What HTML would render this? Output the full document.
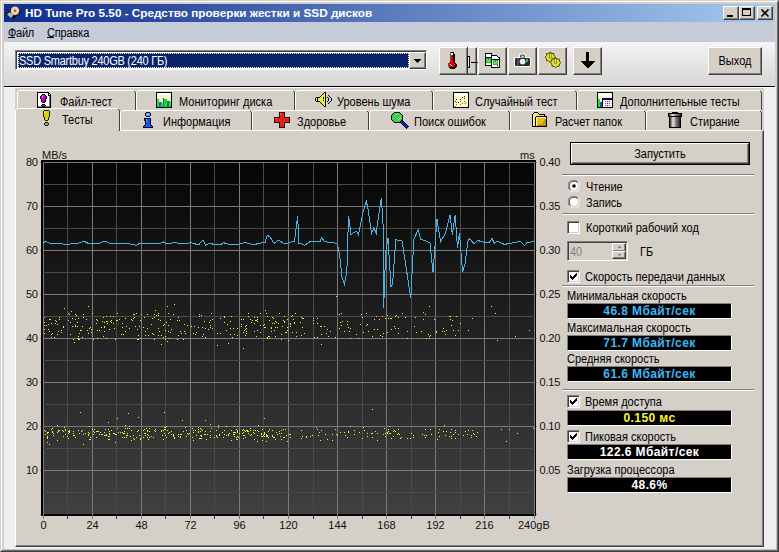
<!DOCTYPE html>
<html><head><meta charset="utf-8"><style>
*{margin:0;padding:0;box-sizing:border-box}
html,body{width:779px;height:552px;overflow:hidden;background:#d4d0c8;font-family:"Liberation Sans", sans-serif;font-size:11px;color:#000}
.a{position:absolute}
.t{position:absolute;white-space:nowrap;line-height:13px;transform:scale(1,1.11);transform-origin:0 2.5px}
.lab{position:absolute;white-space:nowrap;line-height:13px;font-size:11px;color:#101010}
.btn{position:absolute;background:#d4d0c8;border-top:1px solid #fff;border-left:1px solid #fff;border-right:1px solid #404040;border-bottom:1px solid #404040;box-shadow:inset -1px -1px 0 #808080}
.tab{position:absolute;background:#d4d0c8;border-top:1px solid #fff;border-left:1px solid #fff;border-right:1px solid #404040;box-shadow:inset -1px 0 0 #808080}
.sep{position:absolute;height:2px;border-top:1px solid #808080;border-bottom:1px solid #fff}
.box{position:absolute;background:#000;border-top:1px solid #808080;border-left:1px solid #808080;border-right:1px solid #fff;border-bottom:1px solid #fff;font-weight:bold;font-size:12px;text-align:center;line-height:14px;letter-spacing:0.4px}
.chk{position:absolute;width:13px;height:13px;background:#fff;border-top:1px solid #808080;border-left:1px solid #808080;border-right:1px solid #fff;border-bottom:1px solid #fff;box-shadow:inset 1px 1px 0 #404040, inset -1px -1px 0 #d4d0c8}
</style></head><body>
<!-- window frame -->
<div class="a" style="left:0;top:0;width:779px;height:552px;background:#d4d0c8;border-top:1px solid #d4d0c8;border-left:1px solid #d4d0c8;border-right:1px solid #404040;border-bottom:1px solid #404040"></div>
<div class="a" style="left:1px;top:1px;width:777px;height:550px;border-top:1px solid #fff;border-left:1px solid #fff;border-right:1px solid #6a6a6a;border-bottom:1px solid #6a6a6a"></div>
<!-- title bar -->
<div class="a" style="left:4px;top:4px;width:771px;height:18px;background:linear-gradient(90deg,#0e2c8c,#a6caf0)"></div>

<div class="t" style="left:25px;top:6px;color:#fff;font-weight:bold;font-size:11.75px;letter-spacing:0;transform:none">HD Tune Pro 5.50 - Средство проверки жестки и SSD дисков</div>
<div class="btn" style="left:723px;top:6px;width:16px;height:14px"></div>
<div class="a" style="left:727px;top:15px;width:6px;height:2px;background:#000"></div>
<div class="btn" style="left:739px;top:6px;width:16px;height:14px"></div>
<div class="a" style="left:742px;top:8px;width:9px;height:8px;border:1px solid #000;border-top-width:2px"></div>
<div class="btn" style="left:757px;top:6px;width:16px;height:14px"></div>
<svg class="a" style="left:757px;top:6px" width="16" height="14"><path d="M4.5 3.5 L11.5 10.5 M11.5 3.5 L4.5 10.5" stroke="#000" stroke-width="1.6"/></svg>
<!-- menu -->
<div class="a" style="left:4px;top:22px;width:771px;height:20px;background:#c6cbd8"></div>
<div class="t" style="left:8px;top:26px;letter-spacing:-0.3px">Файл</div>
<div class="a" style="left:8px;top:37px;width:7px;height:1px;background:#000"></div>
<div class="t" style="left:47px;top:26px;letter-spacing:-0.15px">Справка</div>
<div class="a" style="left:47px;top:37px;width:7px;height:1px;background:#000"></div>
<!-- toolbar -->
<div class="a" style="left:4px;top:42px;width:771px;height:44px;background:linear-gradient(#f4f4f4,#d6d6d6)"></div>
<div class="a" style="left:4px;top:86px;width:771px;height:1px;background:#000"></div>
<div class="a" style="left:4px;top:87px;width:773px;height:463px;background:#c4c4c4"></div>
<div class="a" style="left:4px;top:87px;width:772px;height:462px;background:#efefef"></div>
<div class="a" style="left:4px;top:87px;width:771px;height:1px;background:#fff"></div>
<!-- combo -->
<div class="a" style="left:15px;top:50px;width:412px;height:20px;background:#fff;border-top:1px solid #808080;border-left:1px solid #808080;border-bottom:1px solid #fff;border-right:1px solid #fff;box-shadow:inset 1px 1px 0 #404040"></div>
<div class="a" style="left:18px;top:53px;width:391px;height:15px;background:#0a246a;outline:1px dotted #fff;outline-offset:-1px"></div>
<div class="t" style="left:19px;top:54px;color:#fff;font-size:11px;letter-spacing:-0.25px">SSD Smartbuy 240GB (240 ГБ)</div>
<div class="btn" style="left:409px;top:52px;width:17px;height:17px"></div>
<svg class="a" style="left:409px;top:52px" width="17" height="17"><path d="M4.5 7 L12.5 7 L8.5 11 Z" fill="#000"/></svg>
<!-- toolbar buttons -->
<div class="btn" style="left:439px;top:47px;width:38px;height:28px"></div>
<div class="a" style="left:466px;top:48px;width:1px;height:26px;background:#808080"></div>
<div class="a" style="left:467px;top:47px;width:1px;height:28px;background:#404040"></div>

<div class="btn" style="left:478px;top:47px;width:29px;height:28px"></div>

<div class="btn" style="left:508px;top:47px;width:29px;height:28px"></div>

<div class="btn" style="left:538px;top:47px;width:29px;height:28px"></div>

<div class="btn" style="left:573px;top:47px;width:29px;height:28px"></div>

<div class="btn" style="left:708px;top:47px;width:54px;height:28px"></div>
<div class="t" style="left:708px;top:54px;width:54px;text-align:center">Выход</div>

<!-- tabs -->
<div class="a" style="left:15px;top:88px;width:749px;height:43px;background:#d4d0c8"></div>
<div class="a" style="left:15px;top:130px;width:749px;height:417px;background:#d4d0c8;border-top:1px solid #fff;border-left:1px solid #fff;border-right:1px solid #404040;border-bottom:1px solid #404040;box-shadow:inset -1px -1px 0 #808080"></div>
<svg class="a" style="left:0;top:0" width="779" height="140" shape-rendering="crispEdges"><rect x="18" y="91" width="117" height="19" fill="#d4d0c8"/><rect x="17" y="92" width="1" height="18" fill="#fff"/><rect x="18" y="91" width="1" height="1" fill="#fff"/><rect x="19" y="90" width="115" height="1" fill="#fff"/><rect x="134" y="91" width="1" height="1" fill="#404040"/><rect x="135" y="92" width="1" height="18" fill="#404040"/><rect x="137" y="91" width="157" height="19" fill="#d4d0c8"/><rect x="136" y="92" width="1" height="18" fill="#fff"/><rect x="137" y="91" width="1" height="1" fill="#fff"/><rect x="138" y="90" width="155" height="1" fill="#fff"/><rect x="293" y="91" width="1" height="1" fill="#404040"/><rect x="294" y="92" width="1" height="18" fill="#404040"/><rect x="296" y="91" width="136" height="19" fill="#d4d0c8"/><rect x="295" y="92" width="1" height="18" fill="#fff"/><rect x="296" y="91" width="1" height="1" fill="#fff"/><rect x="297" y="90" width="134" height="1" fill="#fff"/><rect x="431" y="91" width="1" height="1" fill="#404040"/><rect x="432" y="92" width="1" height="18" fill="#404040"/><rect x="434" y="91" width="142" height="19" fill="#d4d0c8"/><rect x="433" y="92" width="1" height="18" fill="#fff"/><rect x="434" y="91" width="1" height="1" fill="#fff"/><rect x="435" y="90" width="140" height="1" fill="#fff"/><rect x="575" y="91" width="1" height="1" fill="#404040"/><rect x="576" y="92" width="1" height="18" fill="#404040"/><rect x="578" y="91" width="183" height="19" fill="#d4d0c8"/><rect x="577" y="92" width="1" height="18" fill="#fff"/><rect x="578" y="91" width="1" height="1" fill="#fff"/><rect x="579" y="90" width="181" height="1" fill="#fff"/><rect x="760" y="91" width="1" height="1" fill="#404040"/><rect x="761" y="92" width="1" height="18" fill="#404040"/><rect x="121" y="111" width="130" height="19" fill="#d4d0c8"/><rect x="120" y="112" width="1" height="18" fill="#fff"/><rect x="121" y="111" width="1" height="1" fill="#fff"/><rect x="122" y="110" width="128" height="1" fill="#fff"/><rect x="250" y="111" width="1" height="1" fill="#404040"/><rect x="251" y="112" width="1" height="18" fill="#404040"/><rect x="253" y="111" width="115" height="19" fill="#d4d0c8"/><rect x="252" y="112" width="1" height="18" fill="#fff"/><rect x="253" y="111" width="1" height="1" fill="#fff"/><rect x="254" y="110" width="113" height="1" fill="#fff"/><rect x="367" y="111" width="1" height="1" fill="#404040"/><rect x="368" y="112" width="1" height="18" fill="#404040"/><rect x="370" y="111" width="139" height="19" fill="#d4d0c8"/><rect x="369" y="112" width="1" height="18" fill="#fff"/><rect x="370" y="111" width="1" height="1" fill="#fff"/><rect x="371" y="110" width="137" height="1" fill="#fff"/><rect x="508" y="111" width="1" height="1" fill="#404040"/><rect x="509" y="112" width="1" height="18" fill="#404040"/><rect x="511" y="111" width="134" height="19" fill="#d4d0c8"/><rect x="510" y="112" width="1" height="18" fill="#fff"/><rect x="511" y="111" width="1" height="1" fill="#fff"/><rect x="512" y="110" width="132" height="1" fill="#fff"/><rect x="644" y="111" width="1" height="1" fill="#404040"/><rect x="645" y="112" width="1" height="18" fill="#404040"/><rect x="647" y="111" width="114" height="19" fill="#d4d0c8"/><rect x="646" y="112" width="1" height="18" fill="#fff"/><rect x="647" y="111" width="1" height="1" fill="#fff"/><rect x="648" y="110" width="112" height="1" fill="#fff"/><rect x="760" y="111" width="1" height="1" fill="#404040"/><rect x="761" y="112" width="1" height="18" fill="#404040"/><rect x="16" y="109" width="103" height="22" fill="#d4d0c8"/><rect x="15" y="110" width="1" height="21" fill="#fff"/><rect x="16" y="109" width="1" height="1" fill="#fff"/><rect x="17" y="108" width="101" height="1" fill="#fff"/><rect x="118" y="109" width="1" height="1" fill="#404040"/><rect x="119" y="110" width="1" height="21" fill="#404040"/></svg>
<div class="t" style="left:60px;top:95px">Файл-тест</div>
<div class="t" style="left:179px;top:95px">Мониторинг диска</div>
<div class="t" style="left:337px;top:95px">Уровень шума</div>
<div class="t" style="left:475px;top:95px">Случайный тест</div>
<div class="t" style="left:620px;top:95px">Дополнительные тесты</div>
<div class="t" style="left:62px;top:113px">Тесты</div>
<div class="t" style="left:163px;top:115px">Информация</div>
<div class="t" style="left:297px;top:115px">Здоровье</div>
<div class="t" style="left:414px;top:115px">Поиск ошибок</div>
<div class="t" style="left:555px;top:115px">Расчет папок</div>
<div class="t" style="left:690px;top:115px">Стирание</div>


<!-- chart -->
<div class="lab" style="left:42px;top:149px">MB/s</div>
<div class="lab" style="left:520px;top:149px">ms</div>
<svg class="a" style="left:0;top:0" width="779" height="552">
 <defs><linearGradient id="bg" x1="0" y1="0" x2="0" y2="1"><stop offset="0" stop-color="#050505"/><stop offset="1" stop-color="#404040"/></linearGradient></defs>
 <rect x="41" y="160" width="495" height="356" fill="#000"/>
 <rect x="43" y="162" width="492" height="352" fill="url(#bg)"/>
 <rect x="43" y="162" width="1" height="352" fill="#7a7a7a"/><rect x="67" y="162" width="1" height="352" fill="#4a4a4a"/><rect x="92" y="162" width="1" height="352" fill="#7a7a7a"/><rect x="116" y="162" width="1" height="352" fill="#4a4a4a"/><rect x="141" y="162" width="1" height="352" fill="#7a7a7a"/><rect x="165" y="162" width="1" height="352" fill="#4a4a4a"/><rect x="190" y="162" width="1" height="352" fill="#7a7a7a"/><rect x="214" y="162" width="1" height="352" fill="#4a4a4a"/><rect x="239" y="162" width="1" height="352" fill="#7a7a7a"/><rect x="263" y="162" width="1" height="352" fill="#4a4a4a"/><rect x="288" y="162" width="1" height="352" fill="#7a7a7a"/><rect x="313" y="162" width="1" height="352" fill="#4a4a4a"/><rect x="337" y="162" width="1" height="352" fill="#7a7a7a"/><rect x="362" y="162" width="1" height="352" fill="#4a4a4a"/><rect x="386" y="162" width="1" height="352" fill="#7a7a7a"/><rect x="411" y="162" width="1" height="352" fill="#4a4a4a"/><rect x="435" y="162" width="1" height="352" fill="#7a7a7a"/><rect x="460" y="162" width="1" height="352" fill="#4a4a4a"/><rect x="484" y="162" width="1" height="352" fill="#7a7a7a"/><rect x="509" y="162" width="1" height="352" fill="#4a4a4a"/><rect x="534" y="162" width="1" height="352" fill="#7a7a7a"/><rect x="43" y="162" width="492" height="1" fill="#7a7a7a"/><rect x="43" y="184" width="492" height="1" fill="#4a4a4a"/><rect x="43" y="206" width="492" height="1" fill="#7a7a7a"/><rect x="43" y="228" width="492" height="1" fill="#4a4a4a"/><rect x="43" y="250" width="492" height="1" fill="#7a7a7a"/><rect x="43" y="272" width="492" height="1" fill="#4a4a4a"/><rect x="43" y="294" width="492" height="1" fill="#7a7a7a"/><rect x="43" y="316" width="492" height="1" fill="#4a4a4a"/><rect x="43" y="338" width="492" height="1" fill="#7a7a7a"/><rect x="43" y="360" width="492" height="1" fill="#4a4a4a"/><rect x="43" y="382" width="492" height="1" fill="#7a7a7a"/><rect x="43" y="404" width="492" height="1" fill="#4a4a4a"/><rect x="43" y="426" width="492" height="1" fill="#7a7a7a"/><rect x="43" y="448" width="492" height="1" fill="#4a4a4a"/><rect x="43" y="470" width="492" height="1" fill="#7a7a7a"/><rect x="43" y="492" width="492" height="1" fill="#4a4a4a"/><rect x="43" y="514" width="492" height="1" fill="#7a7a7a"/>
 <rect x="41" y="514" width="495" height="2" fill="#000"/>
 <rect x="40" y="162" width="1" height="1" fill="#808080"/><rect x="536" y="162" width="1" height="1" fill="#808080"/><rect x="40" y="206" width="1" height="1" fill="#808080"/><rect x="536" y="206" width="1" height="1" fill="#808080"/><rect x="40" y="250" width="1" height="1" fill="#808080"/><rect x="536" y="250" width="1" height="1" fill="#808080"/><rect x="40" y="294" width="1" height="1" fill="#808080"/><rect x="536" y="294" width="1" height="1" fill="#808080"/><rect x="40" y="338" width="1" height="1" fill="#808080"/><rect x="536" y="338" width="1" height="1" fill="#808080"/><rect x="40" y="382" width="1" height="1" fill="#808080"/><rect x="536" y="382" width="1" height="1" fill="#808080"/><rect x="40" y="426" width="1" height="1" fill="#808080"/><rect x="536" y="426" width="1" height="1" fill="#808080"/><rect x="40" y="470" width="1" height="1" fill="#808080"/><rect x="536" y="470" width="1" height="1" fill="#808080"/><rect x="40" y="514" width="1" height="1" fill="#808080"/><rect x="536" y="514" width="1" height="1" fill="#808080"/><rect x="43" y="514" width="1" height="5" fill="#7a7a7a"/><rect x="67" y="516" width="1" height="3" fill="#404040"/><rect x="92" y="514" width="1" height="5" fill="#7a7a7a"/><rect x="116" y="516" width="1" height="3" fill="#404040"/><rect x="141" y="514" width="1" height="5" fill="#7a7a7a"/><rect x="165" y="516" width="1" height="3" fill="#404040"/><rect x="190" y="514" width="1" height="5" fill="#7a7a7a"/><rect x="214" y="516" width="1" height="3" fill="#404040"/><rect x="239" y="514" width="1" height="5" fill="#7a7a7a"/><rect x="263" y="516" width="1" height="3" fill="#404040"/><rect x="288" y="514" width="1" height="5" fill="#7a7a7a"/><rect x="313" y="516" width="1" height="3" fill="#404040"/><rect x="337" y="514" width="1" height="5" fill="#7a7a7a"/><rect x="362" y="516" width="1" height="3" fill="#404040"/><rect x="386" y="514" width="1" height="5" fill="#7a7a7a"/><rect x="411" y="516" width="1" height="3" fill="#404040"/><rect x="435" y="514" width="1" height="5" fill="#7a7a7a"/><rect x="460" y="516" width="1" height="3" fill="#404040"/><rect x="484" y="514" width="1" height="5" fill="#7a7a7a"/><rect x="509" y="516" width="1" height="3" fill="#404040"/><rect x="534" y="514" width="1" height="5" fill="#7a7a7a"/>
 <polyline points="43.0,243.0 45.6,241.2 50.0,243.3 60.0,243.3 66.5,244.9 72.0,243.5 78.0,243.3 84.0,241.2 88.0,243.3 100.0,243.0 104.0,240.9 110.0,243.3 120.0,243.3 128.0,243.5 136.3,245.4 140.0,243.0 150.0,243.3 160.0,243.8 163.2,241.7 165.6,243.8 176.0,242.5 178.5,243.8 191.3,242.8 198.5,244.9 203.0,240.0 205.7,244.9 208.2,243.8 221.0,244.4 223.9,242.5 225.8,243.8 235.4,244.9 245.0,242.5 254.7,244.9 258.0,243.3 265.1,242.5 267.2,235.2 270.0,236.9 274.0,243.3 278.8,240.0 282.0,242.5 285.0,244.0 289.0,242.5 294.5,241.2 297.6,216.4 299.0,243.5 300.8,243.0 304.5,245.4 310.0,241.7 319.9,241.7 321.7,237.6 324.4,241.7 330.7,242.5 335.0,243.0 337.4,244.0 339.7,256.0 342.0,277.0 344.4,284.0 346.8,272.4 348.0,232.4 348.6,216.4 351.0,234.7 353.8,232.4 356.6,231.2 358.5,234.7 363.2,211.2 366.3,201.3 368.0,208.8 371.5,233.5 373.8,227.6 376.2,233.5 379.2,211.2 381.4,198.2 383.2,226.5 383.7,307.6 385.6,253.5 388.0,238.2 391.0,286.5 392.6,284.1 395.7,239.9 402.0,240.6 410.8,298.2 413.8,239.4 418.2,229.5 420.6,239.4 425.3,240.6 430.0,243.0 433.0,272.4 437.0,219.4 440.6,241.8 445.3,233.5 450.0,214.7 452.4,234.7 455.2,215.0 457.5,248.0 459.4,232.6 462.6,272.0 465.2,263.3 467.7,241.7 469.6,238.6 474.0,243.6 477.8,240.5 484.2,242.4 489.3,242.4 492.0,238.6 494.3,243.2 496.9,241.1 500.0,242.4 504.5,244.5 508.3,243.6 516.0,242.4 520.4,241.1 524.5,245.3 527.3,242.4 534.3,241.7" fill="none" stroke="#4cb2e6" stroke-width="1" shape-rendering="crispEdges"/>
 <g fill="#f0f030"><rect x="122" y="323" width="1" height="1"/><rect x="173" y="314" width="1" height="1"/><rect x="166" y="322" width="1" height="1"/><rect x="148" y="335" width="1" height="1"/><rect x="243" y="332" width="1" height="1"/><rect x="97" y="338" width="1" height="1"/><rect x="183" y="339" width="1" height="1"/><rect x="55" y="320" width="1" height="1"/><rect x="78" y="318" width="1" height="1"/><rect x="87" y="330" width="1" height="1"/><rect x="133" y="314" width="1" height="1"/><rect x="58" y="331" width="1" height="1"/><rect x="147" y="328" width="1" height="1"/><rect x="153" y="334" width="1" height="1"/><rect x="212" y="328" width="1" height="1"/><rect x="170" y="332" width="1" height="1"/><rect x="113" y="316" width="1" height="1"/><rect x="144" y="317" width="1" height="1"/><rect x="161" y="344" width="1" height="1"/><rect x="205" y="328" width="1" height="1"/><rect x="254" y="331" width="1" height="1"/><rect x="187" y="325" width="1" height="1"/><rect x="246" y="325" width="1" height="1"/><rect x="204" y="321" width="1" height="1"/><rect x="283" y="320" width="1" height="1"/><rect x="136" y="313" width="1" height="1"/><rect x="155" y="310" width="1" height="1"/><rect x="72" y="326" width="1" height="1"/><rect x="103" y="336" width="1" height="1"/><rect x="63" y="327" width="1" height="1"/><rect x="256" y="336" width="1" height="1"/><rect x="111" y="322" width="1" height="1"/><rect x="257" y="317" width="1" height="1"/><rect x="86" y="319" width="1" height="1"/><rect x="160" y="320" width="1" height="1"/><rect x="44" y="322" width="1" height="1"/><rect x="180" y="331" width="1" height="1"/><rect x="168" y="331" width="1" height="1"/><rect x="57" y="334" width="1" height="1"/><rect x="254" y="323" width="1" height="1"/><rect x="140" y="320" width="1" height="1"/><rect x="196" y="332" width="1" height="1"/><rect x="83" y="314" width="1" height="1"/><rect x="44" y="329" width="1" height="1"/><rect x="68" y="313" width="1" height="1"/><rect x="254" y="317" width="1" height="1"/><rect x="104" y="322" width="1" height="1"/><rect x="73" y="339" width="1" height="1"/><rect x="156" y="315" width="1" height="1"/><rect x="68" y="320" width="1" height="1"/><rect x="243" y="348" width="1" height="1"/><rect x="171" y="329" width="1" height="1"/><rect x="174" y="304" width="1" height="1"/><rect x="252" y="320" width="1" height="1"/><rect x="132" y="320" width="1" height="1"/><rect x="230" y="334" width="1" height="1"/><rect x="123" y="334" width="1" height="1"/><rect x="281" y="334" width="1" height="1"/><rect x="241" y="319" width="1" height="1"/><rect x="168" y="313" width="1" height="1"/><rect x="50" y="319" width="1" height="1"/><rect x="210" y="325" width="1" height="1"/><rect x="269" y="338" width="1" height="1"/><rect x="131" y="319" width="1" height="1"/><rect x="91" y="329" width="1" height="1"/><rect x="260" y="325" width="1" height="1"/><rect x="201" y="315" width="1" height="1"/><rect x="203" y="334" width="1" height="1"/><rect x="224" y="317" width="1" height="1"/><rect x="234" y="334" width="1" height="1"/><rect x="278" y="323" width="1" height="1"/><rect x="272" y="317" width="1" height="1"/><rect x="74" y="342" width="1" height="1"/><rect x="79" y="339" width="1" height="1"/><rect x="202" y="327" width="1" height="1"/><rect x="75" y="314" width="1" height="1"/><rect x="277" y="327" width="1" height="1"/><rect x="269" y="336" width="1" height="1"/><rect x="243" y="319" width="1" height="1"/><rect x="114" y="328" width="1" height="1"/><rect x="106" y="316" width="1" height="1"/><rect x="263" y="325" width="1" height="1"/><rect x="184" y="324" width="1" height="1"/><rect x="265" y="327" width="1" height="1"/><rect x="170" y="319" width="1" height="1"/><rect x="44" y="317" width="1" height="1"/><rect x="158" y="328" width="1" height="1"/><rect x="122" y="327" width="1" height="1"/><rect x="233" y="328" width="1" height="1"/><rect x="179" y="320" width="1" height="1"/><rect x="230" y="328" width="1" height="1"/><rect x="227" y="324" width="1" height="1"/><rect x="191" y="326" width="1" height="1"/><rect x="210" y="327" width="1" height="1"/><rect x="159" y="331" width="1" height="1"/><rect x="255" y="320" width="1" height="1"/><rect x="178" y="335" width="1" height="1"/><rect x="77" y="322" width="1" height="1"/><rect x="101" y="327" width="1" height="1"/><rect x="205" y="337" width="1" height="1"/><rect x="81" y="330" width="1" height="1"/><rect x="78" y="339" width="1" height="1"/><rect x="96" y="323" width="1" height="1"/><rect x="161" y="335" width="1" height="1"/><rect x="82" y="326" width="1" height="1"/><rect x="125" y="318" width="1" height="1"/><rect x="48" y="324" width="1" height="1"/><rect x="48" y="329" width="1" height="1"/><rect x="167" y="341" width="1" height="1"/><rect x="281" y="339" width="1" height="1"/><rect x="69" y="314" width="1" height="1"/><rect x="231" y="316" width="1" height="1"/><rect x="145" y="335" width="1" height="1"/><rect x="106" y="338" width="1" height="1"/><rect x="212" y="319" width="1" height="1"/><rect x="57" y="324" width="1" height="1"/><rect x="61" y="330" width="1" height="1"/><rect x="237" y="328" width="1" height="1"/><rect x="251" y="322" width="1" height="1"/><rect x="177" y="320" width="1" height="1"/><rect x="75" y="319" width="1" height="1"/><rect x="70" y="322" width="1" height="1"/><rect x="56" y="321" width="1" height="1"/><rect x="117" y="320" width="1" height="1"/><rect x="164" y="324" width="1" height="1"/><rect x="104" y="327" width="1" height="1"/><rect x="220" y="318" width="1" height="1"/><rect x="158" y="315" width="1" height="1"/><rect x="241" y="326" width="1" height="1"/><rect x="245" y="326" width="1" height="1"/><rect x="209" y="322" width="1" height="1"/><rect x="244" y="330" width="1" height="1"/><rect x="141" y="314" width="1" height="1"/><rect x="75" y="325" width="1" height="1"/><rect x="83" y="317" width="1" height="1"/><rect x="246" y="331" width="1" height="1"/><rect x="111" y="320" width="1" height="1"/><rect x="154" y="317" width="1" height="1"/><rect x="275" y="327" width="1" height="1"/><rect x="102" y="321" width="1" height="1"/><rect x="129" y="328" width="1" height="1"/><rect x="135" y="326" width="1" height="1"/><rect x="92" y="313" width="1" height="1"/><rect x="107" y="323" width="1" height="1"/><rect x="49" y="319" width="1" height="1"/><rect x="185" y="333" width="1" height="1"/><rect x="202" y="336" width="1" height="1"/><rect x="137" y="339" width="1" height="1"/><rect x="80" y="330" width="1" height="1"/><rect x="54" y="337" width="1" height="1"/><rect x="195" y="334" width="1" height="1"/><rect x="77" y="326" width="1" height="1"/><rect x="245" y="335" width="1" height="1"/><rect x="184" y="331" width="1" height="1"/><rect x="211" y="313" width="1" height="1"/><rect x="76" y="315" width="1" height="1"/><rect x="245" y="329" width="1" height="1"/><rect x="194" y="326" width="1" height="1"/><rect x="44" y="333" width="1" height="1"/><rect x="165" y="330" width="1" height="1"/><rect x="59" y="319" width="1" height="1"/><rect x="61" y="332" width="1" height="1"/><rect x="93" y="339" width="1" height="1"/><rect x="163" y="325" width="1" height="1"/><rect x="208" y="329" width="1" height="1"/><rect x="198" y="327" width="1" height="1"/><rect x="79" y="333" width="1" height="1"/><rect x="117" y="313" width="1" height="1"/><rect x="58" y="331" width="1" height="1"/><rect x="210" y="320" width="1" height="1"/><rect x="168" y="325" width="1" height="1"/><rect x="72" y="318" width="1" height="1"/><rect x="279" y="313" width="1" height="1"/><rect x="154" y="339" width="1" height="1"/><rect x="152" y="318" width="1" height="1"/><rect x="271" y="328" width="1" height="1"/><rect x="78" y="338" width="1" height="1"/><rect x="75" y="326" width="1" height="1"/><rect x="257" y="319" width="1" height="1"/><rect x="260" y="313" width="1" height="1"/><rect x="44" y="325" width="1" height="1"/><rect x="116" y="320" width="1" height="1"/><rect x="246" y="333" width="1" height="1"/><rect x="224" y="316" width="1" height="1"/><rect x="267" y="337" width="1" height="1"/><rect x="113" y="323" width="1" height="1"/><rect x="284" y="322" width="1" height="1"/><rect x="147" y="314" width="1" height="1"/><rect x="68" y="320" width="1" height="1"/><rect x="269" y="320" width="1" height="1"/><rect x="167" y="306" width="1" height="1"/><rect x="257" y="330" width="1" height="1"/><rect x="264" y="327" width="1" height="1"/><rect x="217" y="345" width="1" height="1"/><rect x="220" y="333" width="1" height="1"/><rect x="199" y="314" width="1" height="1"/><rect x="267" y="316" width="1" height="1"/><rect x="115" y="339" width="1" height="1"/><rect x="106" y="321" width="1" height="1"/><rect x="178" y="317" width="1" height="1"/><rect x="82" y="337" width="1" height="1"/><rect x="163" y="337" width="1" height="1"/><rect x="284" y="316" width="1" height="1"/><rect x="90" y="327" width="1" height="1"/><rect x="126" y="326" width="1" height="1"/><rect x="181" y="333" width="1" height="1"/><rect x="143" y="327" width="1" height="1"/><rect x="134" y="314" width="1" height="1"/><rect x="110" y="316" width="1" height="1"/><rect x="165" y="336" width="1" height="1"/><rect x="96" y="319" width="1" height="1"/><rect x="140" y="338" width="1" height="1"/><rect x="248" y="313" width="1" height="1"/><rect x="51" y="337" width="1" height="1"/><rect x="158" y="313" width="1" height="1"/><rect x="138" y="335" width="1" height="1"/><rect x="250" y="319" width="1" height="1"/><rect x="70" y="334" width="1" height="1"/><rect x="169" y="338" width="1" height="1"/><rect x="217" y="333" width="1" height="1"/><rect x="154" y="314" width="1" height="1"/><rect x="232" y="337" width="1" height="1"/><rect x="199" y="316" width="1" height="1"/><rect x="104" y="331" width="1" height="1"/><rect x="71" y="311" width="1" height="1"/><rect x="137" y="329" width="1" height="1"/><rect x="46" y="325" width="1" height="1"/><rect x="275" y="336" width="1" height="1"/><rect x="158" y="319" width="1" height="1"/><rect x="275" y="321" width="1" height="1"/><rect x="49" y="331" width="1" height="1"/><rect x="145" y="331" width="1" height="1"/><rect x="266" y="313" width="1" height="1"/><rect x="125" y="331" width="1" height="1"/><rect x="91" y="332" width="1" height="1"/><rect x="165" y="339" width="1" height="1"/><rect x="119" y="319" width="1" height="1"/><rect x="97" y="320" width="1" height="1"/><rect x="273" y="318" width="1" height="1"/><rect x="97" y="330" width="1" height="1"/><rect x="272" y="323" width="1" height="1"/><rect x="138" y="339" width="1" height="1"/><rect x="78" y="336" width="1" height="1"/><rect x="260" y="332" width="1" height="1"/><rect x="284" y="321" width="1" height="1"/><rect x="88" y="333" width="1" height="1"/><rect x="51" y="323" width="1" height="1"/><rect x="134" y="317" width="1" height="1"/><rect x="44" y="322" width="1" height="1"/><rect x="274" y="330" width="1" height="1"/><rect x="276" y="322" width="1" height="1"/><rect x="241" y="324" width="1" height="1"/><rect x="55" y="323" width="1" height="1"/><rect x="265" y="310" width="1" height="1"/><rect x="51" y="334" width="1" height="1"/><rect x="228" y="343" width="1" height="1"/><rect x="52" y="333" width="1" height="1"/><rect x="224" y="322" width="1" height="1"/><rect x="109" y="329" width="1" height="1"/><rect x="107" y="321" width="1" height="1"/><rect x="110" y="321" width="1" height="1"/><rect x="226" y="330" width="1" height="1"/><rect x="271" y="327" width="1" height="1"/><rect x="274" y="323" width="1" height="1"/><rect x="104" y="326" width="1" height="1"/><rect x="267" y="338" width="1" height="1"/><rect x="237" y="335" width="1" height="1"/><rect x="230" y="321" width="1" height="1"/><rect x="121" y="334" width="1" height="1"/><rect x="63" y="326" width="1" height="1"/><rect x="59" y="317" width="1" height="1"/><rect x="177" y="339" width="1" height="1"/><rect x="256" y="320" width="1" height="1"/><rect x="64" y="308" width="1" height="1"/><rect x="151" y="324" width="1" height="1"/><rect x="193" y="333" width="1" height="1"/><rect x="248" y="316" width="1" height="1"/><rect x="246" y="328" width="1" height="1"/><rect x="133" y="318" width="1" height="1"/><rect x="103" y="317" width="1" height="1"/><rect x="257" y="321" width="1" height="1"/><rect x="139" y="326" width="1" height="1"/><rect x="99" y="330" width="1" height="1"/><rect x="282" y="326" width="1" height="1"/><rect x="158" y="335" width="1" height="1"/><rect x="264" y="324" width="1" height="1"/><rect x="89" y="328" width="1" height="1"/><rect x="268" y="336" width="1" height="1"/><rect x="152" y="333" width="1" height="1"/><rect x="271" y="331" width="1" height="1"/><rect x="390" y="318" width="1" height="1"/><rect x="350" y="328" width="1" height="1"/><rect x="391" y="318" width="1" height="1"/><rect x="287" y="330" width="1" height="1"/><rect x="317" y="318" width="1" height="1"/><rect x="425" y="314" width="1" height="1"/><rect x="302" y="327" width="1" height="1"/><rect x="398" y="333" width="1" height="1"/><rect x="313" y="323" width="1" height="1"/><rect x="335" y="337" width="1" height="1"/><rect x="340" y="322" width="1" height="1"/><rect x="358" y="338" width="1" height="1"/><rect x="349" y="331" width="1" height="1"/><rect x="321" y="334" width="1" height="1"/><rect x="430" y="335" width="1" height="1"/><rect x="366" y="313" width="1" height="1"/><rect x="382" y="336" width="1" height="1"/><rect x="300" y="322" width="1" height="1"/><rect x="374" y="319" width="1" height="1"/><rect x="335" y="337" width="1" height="1"/><rect x="304" y="333" width="1" height="1"/><rect x="456" y="316" width="1" height="1"/><rect x="451" y="325" width="1" height="1"/><rect x="294" y="323" width="1" height="1"/><rect x="445" y="334" width="1" height="1"/><rect x="313" y="318" width="1" height="1"/><rect x="356" y="334" width="1" height="1"/><rect x="317" y="323" width="1" height="1"/><rect x="376" y="316" width="1" height="1"/><rect x="328" y="336" width="1" height="1"/><rect x="292" y="332" width="1" height="1"/><rect x="291" y="316" width="1" height="1"/><rect x="391" y="329" width="1" height="1"/><rect x="339" y="328" width="1" height="1"/><rect x="360" y="324" width="1" height="1"/><rect x="362" y="317" width="1" height="1"/><rect x="326" y="333" width="1" height="1"/><rect x="366" y="325" width="1" height="1"/><rect x="303" y="318" width="1" height="1"/><rect x="361" y="314" width="1" height="1"/><rect x="292" y="315" width="1" height="1"/><rect x="414" y="326" width="1" height="1"/><rect x="294" y="322" width="1" height="1"/><rect x="453" y="330" width="1" height="1"/><rect x="436" y="332" width="1" height="1"/><rect x="429" y="338" width="1" height="1"/><rect x="372" y="336" width="1" height="1"/><rect x="314" y="337" width="1" height="1"/><rect x="296" y="332" width="1" height="1"/><rect x="313" y="320" width="1" height="1"/><rect x="429" y="306" width="1" height="1"/><rect x="321" y="326" width="1" height="1"/><rect x="341" y="325" width="1" height="1"/><rect x="317" y="337" width="1" height="1"/><rect x="405" y="317" width="1" height="1"/><rect x="423" y="312" width="1" height="1"/><rect x="348" y="327" width="1" height="1"/><rect x="387" y="315" width="1" height="1"/><rect x="460" y="323" width="1" height="1"/><rect x="426" y="338" width="1" height="1"/><rect x="387" y="332" width="1" height="1"/><rect x="363" y="332" width="1" height="1"/><rect x="293" y="319" width="1" height="1"/><rect x="398" y="328" width="1" height="1"/><rect x="402" y="313" width="1" height="1"/><rect x="290" y="323" width="1" height="1"/><rect x="394" y="326" width="1" height="1"/><rect x="443" y="328" width="1" height="1"/><rect x="288" y="340" width="1" height="1"/><rect x="347" y="321" width="1" height="1"/><rect x="388" y="318" width="1" height="1"/><rect x="395" y="316" width="1" height="1"/><rect x="450" y="316" width="1" height="1"/><rect x="301" y="335" width="1" height="1"/><rect x="423" y="319" width="1" height="1"/><rect x="287" y="327" width="1" height="1"/><rect x="347" y="324" width="1" height="1"/><rect x="450" y="319" width="1" height="1"/><rect x="444" y="331" width="1" height="1"/><rect x="379" y="319" width="1" height="1"/><rect x="295" y="313" width="1" height="1"/><rect x="382" y="316" width="1" height="1"/><rect x="320" y="326" width="1" height="1"/><rect x="398" y="317" width="1" height="1"/><rect x="339" y="314" width="1" height="1"/><rect x="442" y="331" width="1" height="1"/><rect x="286" y="332" width="1" height="1"/><rect x="367" y="324" width="1" height="1"/><rect x="324" y="326" width="1" height="1"/><rect x="344" y="331" width="1" height="1"/><rect x="434" y="319" width="1" height="1"/><rect x="383" y="333" width="1" height="1"/><rect x="377" y="329" width="1" height="1"/><rect x="455" y="335" width="1" height="1"/><rect x="287" y="319" width="1" height="1"/><rect x="416" y="332" width="1" height="1"/><rect x="342" y="321" width="1" height="1"/><rect x="327" y="329" width="1" height="1"/><rect x="407" y="338" width="1" height="1"/><rect x="368" y="331" width="1" height="1"/><rect x="436" y="331" width="1" height="1"/><rect x="385" y="318" width="1" height="1"/><rect x="395" y="328" width="1" height="1"/><rect x="446" y="330" width="1" height="1"/><rect x="449" y="316" width="1" height="1"/><rect x="290" y="326" width="1" height="1"/><rect x="407" y="331" width="1" height="1"/><rect x="415" y="317" width="1" height="1"/><rect x="429" y="336" width="1" height="1"/><rect x="296" y="336" width="1" height="1"/><rect x="452" y="320" width="1" height="1"/><rect x="321" y="344" width="1" height="1"/><rect x="428" y="334" width="1" height="1"/><rect x="396" y="315" width="1" height="1"/><rect x="302" y="318" width="1" height="1"/><rect x="341" y="313" width="1" height="1"/><rect x="330" y="331" width="1" height="1"/><rect x="350" y="338" width="1" height="1"/><rect x="374" y="329" width="1" height="1"/><rect x="290" y="324" width="1" height="1"/><rect x="421" y="331" width="1" height="1"/><rect x="380" y="335" width="1" height="1"/><rect x="301" y="317" width="1" height="1"/><rect x="285" y="332" width="1" height="1"/><rect x="458" y="330" width="1" height="1"/><rect x="88" y="306" width="1" height="1"/><rect x="336" y="296" width="1" height="1"/><rect x="491" y="306" width="1" height="1"/><rect x="495" y="313" width="1" height="1"/><rect x="497" y="340" width="1" height="1"/><rect x="515" y="336" width="1" height="1"/><rect x="529" y="330" width="1" height="1"/><rect x="472" y="318" width="1" height="1"/><rect x="468" y="330" width="1" height="1"/><rect x="164" y="427" width="1" height="1"/><rect x="89" y="433" width="1" height="1"/><rect x="165" y="429" width="1" height="1"/><rect x="108" y="439" width="1" height="1"/><rect x="276" y="432" width="1" height="1"/><rect x="216" y="435" width="1" height="1"/><rect x="166" y="437" width="1" height="1"/><rect x="63" y="436" width="1" height="1"/><rect x="237" y="431" width="1" height="1"/><rect x="198" y="427" width="1" height="1"/><rect x="131" y="430" width="1" height="1"/><rect x="263" y="435" width="1" height="1"/><rect x="65" y="434" width="1" height="1"/><rect x="94" y="432" width="1" height="1"/><rect x="108" y="436" width="1" height="1"/><rect x="137" y="431" width="1" height="1"/><rect x="261" y="433" width="1" height="1"/><rect x="174" y="437" width="1" height="1"/><rect x="229" y="433" width="1" height="1"/><rect x="129" y="428" width="1" height="1"/><rect x="124" y="437" width="1" height="1"/><rect x="206" y="439" width="1" height="1"/><rect x="226" y="435" width="1" height="1"/><rect x="234" y="436" width="1" height="1"/><rect x="186" y="436" width="1" height="1"/><rect x="261" y="436" width="1" height="1"/><rect x="102" y="434" width="1" height="1"/><rect x="216" y="436" width="1" height="1"/><rect x="251" y="434" width="1" height="1"/><rect x="104" y="435" width="1" height="1"/><rect x="124" y="431" width="1" height="1"/><rect x="124" y="433" width="1" height="1"/><rect x="90" y="439" width="1" height="1"/><rect x="69" y="432" width="1" height="1"/><rect x="280" y="436" width="1" height="1"/><rect x="286" y="435" width="1" height="1"/><rect x="239" y="433" width="1" height="1"/><rect x="92" y="429" width="1" height="1"/><rect x="200" y="435" width="1" height="1"/><rect x="139" y="435" width="1" height="1"/><rect x="52" y="428" width="1" height="1"/><rect x="214" y="437" width="1" height="1"/><rect x="167" y="430" width="1" height="1"/><rect x="78" y="430" width="1" height="1"/><rect x="192" y="428" width="1" height="1"/><rect x="267" y="436" width="1" height="1"/><rect x="149" y="428" width="1" height="1"/><rect x="147" y="430" width="1" height="1"/><rect x="100" y="432" width="1" height="1"/><rect x="234" y="426" width="1" height="1"/><rect x="216" y="436" width="1" height="1"/><rect x="201" y="429" width="1" height="1"/><rect x="155" y="431" width="1" height="1"/><rect x="68" y="438" width="1" height="1"/><rect x="147" y="434" width="1" height="1"/><rect x="198" y="427" width="1" height="1"/><rect x="105" y="429" width="1" height="1"/><rect x="196" y="435" width="1" height="1"/><rect x="144" y="429" width="1" height="1"/><rect x="89" y="426" width="1" height="1"/><rect x="205" y="434" width="1" height="1"/><rect x="164" y="429" width="1" height="1"/><rect x="283" y="437" width="1" height="1"/><rect x="83" y="434" width="1" height="1"/><rect x="236" y="437" width="1" height="1"/><rect x="68" y="431" width="1" height="1"/><rect x="185" y="427" width="1" height="1"/><rect x="169" y="432" width="1" height="1"/><rect x="201" y="435" width="1" height="1"/><rect x="144" y="429" width="1" height="1"/><rect x="277" y="434" width="1" height="1"/><rect x="140" y="438" width="1" height="1"/><rect x="231" y="440" width="1" height="1"/><rect x="131" y="440" width="1" height="1"/><rect x="57" y="432" width="1" height="1"/><rect x="47" y="437" width="1" height="1"/><rect x="146" y="428" width="1" height="1"/><rect x="130" y="436" width="1" height="1"/><rect x="109" y="434" width="1" height="1"/><rect x="275" y="439" width="1" height="1"/><rect x="173" y="434" width="1" height="1"/><rect x="140" y="439" width="1" height="1"/><rect x="96" y="437" width="1" height="1"/><rect x="243" y="438" width="1" height="1"/><rect x="200" y="428" width="1" height="1"/><rect x="99" y="434" width="1" height="1"/><rect x="281" y="430" width="1" height="1"/><rect x="245" y="437" width="1" height="1"/><rect x="244" y="430" width="1" height="1"/><rect x="178" y="434" width="1" height="1"/><rect x="74" y="435" width="1" height="1"/><rect x="253" y="430" width="1" height="1"/><rect x="109" y="431" width="1" height="1"/><rect x="148" y="435" width="1" height="1"/><rect x="89" y="439" width="1" height="1"/><rect x="113" y="433" width="1" height="1"/><rect x="104" y="432" width="1" height="1"/><rect x="149" y="437" width="1" height="1"/><rect x="200" y="431" width="1" height="1"/><rect x="272" y="430" width="1" height="1"/><rect x="254" y="439" width="1" height="1"/><rect x="266" y="435" width="1" height="1"/><rect x="236" y="437" width="1" height="1"/><rect x="199" y="438" width="1" height="1"/><rect x="47" y="442" width="1" height="1"/><rect x="205" y="434" width="1" height="1"/><rect x="105" y="435" width="1" height="1"/><rect x="101" y="434" width="1" height="1"/><rect x="234" y="432" width="1" height="1"/><rect x="266" y="435" width="1" height="1"/><rect x="238" y="437" width="1" height="1"/><rect x="193" y="440" width="1" height="1"/><rect x="236" y="429" width="1" height="1"/><rect x="237" y="426" width="1" height="1"/><rect x="250" y="435" width="1" height="1"/><rect x="174" y="438" width="1" height="1"/><rect x="226" y="426" width="1" height="1"/><rect x="180" y="436" width="1" height="1"/><rect x="109" y="433" width="1" height="1"/><rect x="165" y="435" width="1" height="1"/><rect x="58" y="431" width="1" height="1"/><rect x="164" y="433" width="1" height="1"/><rect x="166" y="426" width="1" height="1"/><rect x="45" y="431" width="1" height="1"/><rect x="250" y="428" width="1" height="1"/><rect x="207" y="434" width="1" height="1"/><rect x="250" y="430" width="1" height="1"/><rect x="280" y="436" width="1" height="1"/><rect x="62" y="430" width="1" height="1"/><rect x="51" y="429" width="1" height="1"/><rect x="193" y="430" width="1" height="1"/><rect x="125" y="425" width="1" height="1"/><rect x="285" y="429" width="1" height="1"/><rect x="264" y="433" width="1" height="1"/><rect x="52" y="432" width="1" height="1"/><rect x="127" y="428" width="1" height="1"/><rect x="255" y="430" width="1" height="1"/><rect x="173" y="436" width="1" height="1"/><rect x="233" y="434" width="1" height="1"/><rect x="147" y="437" width="1" height="1"/><rect x="180" y="434" width="1" height="1"/><rect x="247" y="430" width="1" height="1"/><rect x="143" y="430" width="1" height="1"/><rect x="168" y="433" width="1" height="1"/><rect x="283" y="429" width="1" height="1"/><rect x="125" y="428" width="1" height="1"/><rect x="122" y="432" width="1" height="1"/><rect x="200" y="438" width="1" height="1"/><rect x="236" y="439" width="1" height="1"/><rect x="261" y="434" width="1" height="1"/><rect x="178" y="436" width="1" height="1"/><rect x="45" y="434" width="1" height="1"/><rect x="90" y="437" width="1" height="1"/><rect x="205" y="431" width="1" height="1"/><rect x="238" y="437" width="1" height="1"/><rect x="195" y="430" width="1" height="1"/><rect x="198" y="431" width="1" height="1"/><rect x="211" y="428" width="1" height="1"/><rect x="96" y="431" width="1" height="1"/><rect x="231" y="430" width="1" height="1"/><rect x="68" y="433" width="1" height="1"/><rect x="234" y="434" width="1" height="1"/><rect x="268" y="431" width="1" height="1"/><rect x="246" y="430" width="1" height="1"/><rect x="237" y="430" width="1" height="1"/><rect x="118" y="432" width="1" height="1"/><rect x="147" y="431" width="1" height="1"/><rect x="201" y="436" width="1" height="1"/><rect x="273" y="437" width="1" height="1"/><rect x="53" y="435" width="1" height="1"/><rect x="73" y="435" width="1" height="1"/><rect x="269" y="429" width="1" height="1"/><rect x="153" y="437" width="1" height="1"/><rect x="189" y="433" width="1" height="1"/><rect x="274" y="437" width="1" height="1"/><rect x="145" y="433" width="1" height="1"/><rect x="69" y="431" width="1" height="1"/><rect x="81" y="431" width="1" height="1"/><rect x="47" y="438" width="1" height="1"/><rect x="73" y="433" width="1" height="1"/><rect x="281" y="439" width="1" height="1"/><rect x="75" y="437" width="1" height="1"/><rect x="48" y="432" width="1" height="1"/><rect x="224" y="430" width="1" height="1"/><rect x="90" y="439" width="1" height="1"/><rect x="219" y="435" width="1" height="1"/><rect x="254" y="433" width="1" height="1"/><rect x="198" y="432" width="1" height="1"/><rect x="218" y="425" width="1" height="1"/><rect x="106" y="435" width="1" height="1"/><rect x="281" y="433" width="1" height="1"/><rect x="47" y="432" width="1" height="1"/><rect x="204" y="434" width="1" height="1"/><rect x="120" y="432" width="1" height="1"/><rect x="223" y="437" width="1" height="1"/><rect x="163" y="439" width="1" height="1"/><rect x="58" y="430" width="1" height="1"/><rect x="151" y="436" width="1" height="1"/><rect x="210" y="437" width="1" height="1"/><rect x="133" y="438" width="1" height="1"/><rect x="202" y="430" width="1" height="1"/><rect x="138" y="430" width="1" height="1"/><rect x="237" y="439" width="1" height="1"/><rect x="183" y="431" width="1" height="1"/><rect x="115" y="442" width="1" height="1"/><rect x="217" y="437" width="1" height="1"/><rect x="247" y="431" width="1" height="1"/><rect x="284" y="437" width="1" height="1"/><rect x="248" y="431" width="1" height="1"/><rect x="149" y="431" width="1" height="1"/><rect x="262" y="429" width="1" height="1"/><rect x="192" y="437" width="1" height="1"/><rect x="264" y="434" width="1" height="1"/><rect x="44" y="430" width="1" height="1"/><rect x="108" y="429" width="1" height="1"/><rect x="244" y="435" width="1" height="1"/><rect x="262" y="440" width="1" height="1"/><rect x="243" y="435" width="1" height="1"/><rect x="257" y="430" width="1" height="1"/><rect x="253" y="432" width="1" height="1"/><rect x="242" y="430" width="1" height="1"/><rect x="129" y="426" width="1" height="1"/><rect x="64" y="427" width="1" height="1"/><rect x="93" y="431" width="1" height="1"/><rect x="228" y="435" width="1" height="1"/><rect x="193" y="432" width="1" height="1"/><rect x="210" y="431" width="1" height="1"/><rect x="106" y="434" width="1" height="1"/><rect x="228" y="434" width="1" height="1"/><rect x="65" y="429" width="1" height="1"/><rect x="242" y="433" width="1" height="1"/><rect x="186" y="430" width="1" height="1"/><rect x="264" y="436" width="1" height="1"/><rect x="161" y="430" width="1" height="1"/><rect x="188" y="434" width="1" height="1"/><rect x="88" y="435" width="1" height="1"/><rect x="216" y="430" width="1" height="1"/><rect x="143" y="437" width="1" height="1"/><rect x="171" y="434" width="1" height="1"/><rect x="289" y="434" width="1" height="1"/><rect x="136" y="437" width="1" height="1"/><rect x="237" y="436" width="1" height="1"/><rect x="82" y="430" width="1" height="1"/><rect x="171" y="431" width="1" height="1"/><rect x="49" y="444" width="1" height="1"/><rect x="257" y="435" width="1" height="1"/><rect x="163" y="430" width="1" height="1"/><rect x="235" y="432" width="1" height="1"/><rect x="148" y="439" width="1" height="1"/><rect x="245" y="431" width="1" height="1"/><rect x="281" y="433" width="1" height="1"/><rect x="93" y="434" width="1" height="1"/><rect x="88" y="434" width="1" height="1"/><rect x="181" y="434" width="1" height="1"/><rect x="258" y="425" width="1" height="1"/><rect x="267" y="435" width="1" height="1"/><rect x="59" y="430" width="1" height="1"/><rect x="73" y="431" width="1" height="1"/><rect x="279" y="433" width="1" height="1"/><rect x="201" y="438" width="1" height="1"/><rect x="279" y="431" width="1" height="1"/><rect x="154" y="430" width="1" height="1"/><rect x="83" y="444" width="1" height="1"/><rect x="98" y="431" width="1" height="1"/><rect x="53" y="433" width="1" height="1"/><rect x="266" y="436" width="1" height="1"/><rect x="266" y="434" width="1" height="1"/><rect x="237" y="432" width="1" height="1"/><rect x="218" y="427" width="1" height="1"/><rect x="57" y="425" width="1" height="1"/><rect x="79" y="433" width="1" height="1"/><rect x="210" y="424" width="1" height="1"/><rect x="117" y="428" width="1" height="1"/><rect x="69" y="430" width="1" height="1"/><rect x="123" y="433" width="1" height="1"/><rect x="162" y="435" width="1" height="1"/><rect x="85" y="433" width="1" height="1"/><rect x="210" y="435" width="1" height="1"/><rect x="47" y="433" width="1" height="1"/><rect x="52" y="431" width="1" height="1"/><rect x="272" y="435" width="1" height="1"/><rect x="257" y="441" width="1" height="1"/><rect x="262" y="436" width="1" height="1"/><rect x="67" y="436" width="1" height="1"/><rect x="272" y="436" width="1" height="1"/><rect x="155" y="429" width="1" height="1"/><rect x="127" y="435" width="1" height="1"/><rect x="198" y="429" width="1" height="1"/><rect x="79" y="433" width="1" height="1"/><rect x="219" y="434" width="1" height="1"/><rect x="180" y="437" width="1" height="1"/><rect x="109" y="439" width="1" height="1"/><rect x="145" y="435" width="1" height="1"/><rect x="250" y="435" width="1" height="1"/><rect x="126" y="435" width="1" height="1"/><rect x="122" y="437" width="1" height="1"/><rect x="266" y="441" width="1" height="1"/><rect x="57" y="440" width="1" height="1"/><rect x="264" y="432" width="1" height="1"/><rect x="161" y="431" width="1" height="1"/><rect x="114" y="433" width="1" height="1"/><rect x="133" y="435" width="1" height="1"/><rect x="287" y="441" width="1" height="1"/><rect x="68" y="433" width="1" height="1"/><rect x="115" y="434" width="1" height="1"/><rect x="222" y="432" width="1" height="1"/><rect x="116" y="434" width="1" height="1"/><rect x="242" y="433" width="1" height="1"/><rect x="127" y="433" width="1" height="1"/><rect x="248" y="433" width="1" height="1"/><rect x="173" y="435" width="1" height="1"/><rect x="268" y="437" width="1" height="1"/><rect x="97" y="431" width="1" height="1"/><rect x="88" y="432" width="1" height="1"/><rect x="233" y="432" width="1" height="1"/><rect x="63" y="431" width="1" height="1"/><rect x="65" y="430" width="1" height="1"/><rect x="111" y="430" width="1" height="1"/><rect x="94" y="429" width="1" height="1"/><rect x="243" y="429" width="1" height="1"/><rect x="187" y="433" width="1" height="1"/><rect x="224" y="434" width="1" height="1"/><rect x="144" y="433" width="1" height="1"/><rect x="243" y="432" width="1" height="1"/><rect x="126" y="437" width="1" height="1"/><rect x="165" y="427" width="1" height="1"/><rect x="47" y="436" width="1" height="1"/><rect x="258" y="431" width="1" height="1"/><rect x="109" y="436" width="1" height="1"/><rect x="134" y="439" width="1" height="1"/><rect x="321" y="430" width="1" height="1"/><rect x="290" y="437" width="1" height="1"/><rect x="388" y="429" width="1" height="1"/><rect x="312" y="435" width="1" height="1"/><rect x="425" y="437" width="1" height="1"/><rect x="350" y="426" width="1" height="1"/><rect x="425" y="429" width="1" height="1"/><rect x="301" y="438" width="1" height="1"/><rect x="455" y="438" width="1" height="1"/><rect x="387" y="432" width="1" height="1"/><rect x="390" y="433" width="1" height="1"/><rect x="473" y="433" width="1" height="1"/><rect x="332" y="434" width="1" height="1"/><rect x="337" y="435" width="1" height="1"/><rect x="445" y="435" width="1" height="1"/><rect x="422" y="434" width="1" height="1"/><rect x="327" y="439" width="1" height="1"/><rect x="399" y="434" width="1" height="1"/><rect x="389" y="433" width="1" height="1"/><rect x="455" y="432" width="1" height="1"/><rect x="426" y="435" width="1" height="1"/><rect x="383" y="434" width="1" height="1"/><rect x="385" y="433" width="1" height="1"/><rect x="367" y="436" width="1" height="1"/><rect x="316" y="427" width="1" height="1"/><rect x="317" y="429" width="1" height="1"/><rect x="398" y="433" width="1" height="1"/><rect x="446" y="431" width="1" height="1"/><rect x="468" y="430" width="1" height="1"/><rect x="449" y="436" width="1" height="1"/><rect x="389" y="426" width="1" height="1"/><rect x="437" y="439" width="1" height="1"/><rect x="354" y="434" width="1" height="1"/><rect x="372" y="437" width="1" height="1"/><rect x="476" y="436" width="1" height="1"/><rect x="444" y="425" width="1" height="1"/><rect x="451" y="438" width="1" height="1"/><rect x="471" y="435" width="1" height="1"/><rect x="467" y="434" width="1" height="1"/><rect x="410" y="438" width="1" height="1"/><rect x="359" y="432" width="1" height="1"/><rect x="372" y="433" width="1" height="1"/><rect x="385" y="436" width="1" height="1"/><rect x="474" y="434" width="1" height="1"/><rect x="437" y="439" width="1" height="1"/><rect x="443" y="431" width="1" height="1"/><rect x="458" y="434" width="1" height="1"/><rect x="411" y="433" width="1" height="1"/><rect x="340" y="432" width="1" height="1"/><rect x="393" y="431" width="1" height="1"/><rect x="465" y="431" width="1" height="1"/><rect x="388" y="431" width="1" height="1"/><rect x="372" y="437" width="1" height="1"/><rect x="348" y="432" width="1" height="1"/><rect x="413" y="437" width="1" height="1"/><rect x="471" y="437" width="1" height="1"/><rect x="387" y="433" width="1" height="1"/><rect x="391" y="438" width="1" height="1"/><rect x="318" y="435" width="1" height="1"/><rect x="345" y="435" width="1" height="1"/><rect x="367" y="433" width="1" height="1"/><rect x="306" y="436" width="1" height="1"/><rect x="393" y="436" width="1" height="1"/><rect x="398" y="429" width="1" height="1"/><rect x="413" y="435" width="1" height="1"/><rect x="377" y="440" width="1" height="1"/><rect x="394" y="430" width="1" height="1"/><rect x="348" y="431" width="1" height="1"/><rect x="336" y="434" width="1" height="1"/><rect x="362" y="438" width="1" height="1"/><rect x="401" y="437" width="1" height="1"/><rect x="453" y="434" width="1" height="1"/><rect x="335" y="429" width="1" height="1"/><rect x="344" y="432" width="1" height="1"/><rect x="477" y="432" width="1" height="1"/><rect x="320" y="440" width="1" height="1"/><rect x="302" y="436" width="1" height="1"/><rect x="301" y="430" width="1" height="1"/><rect x="363" y="427" width="1" height="1"/><rect x="310" y="436" width="1" height="1"/><rect x="332" y="440" width="1" height="1"/><rect x="319" y="432" width="1" height="1"/><rect x="354" y="430" width="1" height="1"/><rect x="407" y="438" width="1" height="1"/><rect x="451" y="436" width="1" height="1"/><rect x="430" y="429" width="1" height="1"/><rect x="431" y="434" width="1" height="1"/><rect x="439" y="429" width="1" height="1"/><rect x="424" y="435" width="1" height="1"/><rect x="455" y="432" width="1" height="1"/><rect x="290" y="434" width="1" height="1"/><rect x="384" y="428" width="1" height="1"/><rect x="472" y="430" width="1" height="1"/><rect x="438" y="432" width="1" height="1"/><rect x="455" y="430" width="1" height="1"/><rect x="375" y="431" width="1" height="1"/><rect x="377" y="433" width="1" height="1"/><rect x="364" y="430" width="1" height="1"/><rect x="395" y="431" width="1" height="1"/><rect x="439" y="436" width="1" height="1"/><rect x="451" y="429" width="1" height="1"/><rect x="325" y="434" width="1" height="1"/><rect x="347" y="437" width="1" height="1"/><rect x="400" y="438" width="1" height="1"/><rect x="306" y="437" width="1" height="1"/><rect x="450" y="432" width="1" height="1"/><rect x="449" y="436" width="1" height="1"/><rect x="371" y="433" width="1" height="1"/><rect x="463" y="435" width="1" height="1"/><rect x="397" y="434" width="1" height="1"/><rect x="506" y="441" width="1" height="1"/><rect x="509" y="429" width="1" height="1"/><rect x="533" y="428" width="1" height="1"/><rect x="517" y="433" width="1" height="1"/><rect x="501" y="429" width="1" height="1"/><rect x="117" y="418" width="1" height="1"/><rect x="108" y="422" width="1" height="1"/><rect x="128" y="413" width="1" height="1"/><rect x="164" y="412" width="1" height="1"/><rect x="138" y="417" width="1" height="1"/><rect x="182" y="420" width="1" height="1"/><rect x="205" y="420" width="1" height="1"/><rect x="372" y="409" width="1" height="1"/><rect x="80" y="412" width="1" height="1"/><rect x="264" y="418" width="1" height="1"/></g>
</svg>
<div class="lab" style="left:0;width:37.5px;text-align:right;top:156px;letter-spacing:-0.4px">80</div>
<div class="lab" style="left:539.5px;top:156px;letter-spacing:-0.2px">0.40</div>
<div class="lab" style="left:0;width:37.5px;text-align:right;top:200px;letter-spacing:-0.4px">70</div>
<div class="lab" style="left:539.5px;top:200px;letter-spacing:-0.2px">0.35</div>
<div class="lab" style="left:0;width:37.5px;text-align:right;top:244px;letter-spacing:-0.4px">60</div>
<div class="lab" style="left:539.5px;top:244px;letter-spacing:-0.2px">0.30</div>
<div class="lab" style="left:0;width:37.5px;text-align:right;top:288px;letter-spacing:-0.4px">50</div>
<div class="lab" style="left:539.5px;top:288px;letter-spacing:-0.2px">0.25</div>
<div class="lab" style="left:0;width:37.5px;text-align:right;top:332px;letter-spacing:-0.4px">40</div>
<div class="lab" style="left:539.5px;top:332px;letter-spacing:-0.2px">0.20</div>
<div class="lab" style="left:0;width:37.5px;text-align:right;top:376px;letter-spacing:-0.4px">30</div>
<div class="lab" style="left:539.5px;top:376px;letter-spacing:-0.2px">0.15</div>
<div class="lab" style="left:0;width:37.5px;text-align:right;top:420px;letter-spacing:-0.4px">20</div>
<div class="lab" style="left:539.5px;top:420px;letter-spacing:-0.2px">0.10</div>
<div class="lab" style="left:0;width:37.5px;text-align:right;top:464px;letter-spacing:-0.4px">10</div>
<div class="lab" style="left:539.5px;top:464px;letter-spacing:-0.2px">0.05</div>
<div class="lab" style="left:23px;width:41px;text-align:center;top:519px">0</div>
<div class="lab" style="left:72px;width:41px;text-align:center;top:519px">24</div>
<div class="lab" style="left:121px;width:41px;text-align:center;top:519px">48</div>
<div class="lab" style="left:170px;width:41px;text-align:center;top:519px">72</div>
<div class="lab" style="left:219px;width:41px;text-align:center;top:519px">96</div>
<div class="lab" style="left:268px;width:41px;text-align:center;top:519px">120</div>
<div class="lab" style="left:317px;width:41px;text-align:center;top:519px">144</div>
<div class="lab" style="left:366px;width:41px;text-align:center;top:519px">168</div>
<div class="lab" style="left:415px;width:41px;text-align:center;top:519px">192</div>
<div class="lab" style="left:464px;width:41px;text-align:center;top:519px">216</div>
<div class="lab" style="left:518px;top:519px">240gB</div>

<!-- right controls -->
<div class="a" style="left:570px;top:142px;width:180px;height:23px;border:1px solid #000"></div>
<div class="btn" style="left:571px;top:143px;width:178px;height:21px"></div>
<div class="t" style="left:571px;top:147px;width:178px;text-align:center">Запустить</div>
<div class="sep" style="left:562px;top:174px;width:192px"></div>
<svg class="a" style="left:568px;top:180px" width="12" height="12" viewBox="0 0 12 12">
 <path d="M1.5 9.5 A5 5 0 0 1 9.5 1.5" stroke="#808080" fill="none"/>
 <path d="M2.5 9.5 A4.2 4.2 0 0 1 9.5 2.5" stroke="#404040" fill="none"/>
 <path d="M10.5 2.5 A5 5 0 0 1 2.5 10.5" stroke="#fff" fill="none"/>
 <circle cx="6" cy="6" r="4" fill="#fff"/>
 <circle cx="6" cy="6" r="1.8" fill="#000"/>
</svg>
<div class="t" style="left:586px;top:180px">Чтение</div>
<svg class="a" style="left:568px;top:196px" width="12" height="12" viewBox="0 0 12 12">
 <path d="M1.5 9.5 A5 5 0 0 1 9.5 1.5" stroke="#808080" fill="none"/>
 <path d="M2.5 9.5 A4.2 4.2 0 0 1 9.5 2.5" stroke="#404040" fill="none"/>
 <path d="M10.5 2.5 A5 5 0 0 1 2.5 10.5" stroke="#fff" fill="none"/>
 <circle cx="6" cy="6" r="4" fill="#fff"/>
</svg>
<div class="t" style="left:586px;top:196px">Запись</div>
<div class="sep" style="left:562px;top:213px;width:192px"></div>
<div class="chk" style="left:567px;top:221px"></div>
<div class="t" style="left:586px;top:221px">Короткий рабочий ход</div>
<div class="a" style="left:567px;top:241px;width:61px;height:20px;background:#d4d0c8;border-top:1px solid #808080;border-left:1px solid #808080;border-right:1px solid #fff;border-bottom:1px solid #fff;box-shadow:inset 1px 1px 0 #404040"></div>
<div class="t" style="left:570px;top:245px;color:#808080">40</div>
<div class="btn" style="left:612px;top:243px;width:14px;height:9px"></div>
<div class="btn" style="left:612px;top:251px;width:14px;height:8px"></div>
<svg class="a" style="left:612px;top:243px" width="14" height="16" shape-rendering="crispEdges"><rect x="7" y="3" width="1" height="1" fill="#808080"/><rect x="6" y="4" width="3" height="1" fill="#808080"/><rect x="6" y="11" width="3" height="1" fill="#808080"/><rect x="7" y="12" width="1" height="1" fill="#808080"/></svg>
<div class="t" style="left:640px;top:245px">ГБ</div>
<div class="chk" style="left:567px;top:270px"></div>
<svg class="a" style="left:567px;top:270px" width="13" height="13" shape-rendering="crispEdges"><g fill="#000"><rect x="9" y="3" width="1" height="1"/><rect x="8" y="4" width="1" height="1"/><rect x="9" y="4" width="1" height="1"/><rect x="3" y="5" width="1" height="1"/><rect x="7" y="5" width="1" height="1"/><rect x="8" y="5" width="1" height="1"/><rect x="9" y="5" width="1" height="1"/><rect x="3" y="6" width="1" height="1"/><rect x="4" y="6" width="1" height="1"/><rect x="6" y="6" width="1" height="1"/><rect x="7" y="6" width="1" height="1"/><rect x="8" y="6" width="1" height="1"/><rect x="3" y="7" width="1" height="1"/><rect x="4" y="7" width="1" height="1"/><rect x="5" y="7" width="1" height="1"/><rect x="6" y="7" width="1" height="1"/><rect x="7" y="7" width="1" height="1"/><rect x="4" y="8" width="1" height="1"/><rect x="5" y="8" width="1" height="1"/><rect x="6" y="8" width="1" height="1"/><rect x="5" y="9" width="1" height="1"/></g></svg>
<div class="t" style="left:585px;top:270px">Скорость передачи данных</div>
<div class="sep" style="left:562px;top:285px;width:192px"></div>
<div class="t" style="left:567px;top:289px">Минимальная скорость</div>
<div class="box" style="left:567px;top:303px;width:165px;height:16px;color:#3cb8f4">46.8 Мбайт/сек</div>
<div class="t" style="left:567px;top:321px">Максимальная скорость</div>
<div class="box" style="left:567px;top:335px;width:165px;height:16px;color:#3cb8f4">71.7 Мбайт/сек</div>
<div class="t" style="left:567px;top:352px">Средняя скорость</div>
<div class="box" style="left:567px;top:366px;width:165px;height:16px;color:#3cb8f4">61.6 Мбайт/сек</div>
<div class="sep" style="left:562px;top:389px;width:192px"></div>
<div class="chk" style="left:567px;top:395px"></div>
<svg class="a" style="left:567px;top:395px" width="13" height="13" shape-rendering="crispEdges"><g fill="#000"><rect x="9" y="3" width="1" height="1"/><rect x="8" y="4" width="1" height="1"/><rect x="9" y="4" width="1" height="1"/><rect x="3" y="5" width="1" height="1"/><rect x="7" y="5" width="1" height="1"/><rect x="8" y="5" width="1" height="1"/><rect x="9" y="5" width="1" height="1"/><rect x="3" y="6" width="1" height="1"/><rect x="4" y="6" width="1" height="1"/><rect x="6" y="6" width="1" height="1"/><rect x="7" y="6" width="1" height="1"/><rect x="8" y="6" width="1" height="1"/><rect x="3" y="7" width="1" height="1"/><rect x="4" y="7" width="1" height="1"/><rect x="5" y="7" width="1" height="1"/><rect x="6" y="7" width="1" height="1"/><rect x="7" y="7" width="1" height="1"/><rect x="4" y="8" width="1" height="1"/><rect x="5" y="8" width="1" height="1"/><rect x="6" y="8" width="1" height="1"/><rect x="5" y="9" width="1" height="1"/></g></svg>
<div class="t" style="left:585px;top:395px">Время доступа</div>
<div class="box" style="left:567px;top:410px;width:165px;height:16px;color:#f8f830">0.150 мс</div>
<div class="chk" style="left:567px;top:430px"></div>
<svg class="a" style="left:567px;top:430px" width="13" height="13" shape-rendering="crispEdges"><g fill="#000"><rect x="9" y="3" width="1" height="1"/><rect x="8" y="4" width="1" height="1"/><rect x="9" y="4" width="1" height="1"/><rect x="3" y="5" width="1" height="1"/><rect x="7" y="5" width="1" height="1"/><rect x="8" y="5" width="1" height="1"/><rect x="9" y="5" width="1" height="1"/><rect x="3" y="6" width="1" height="1"/><rect x="4" y="6" width="1" height="1"/><rect x="6" y="6" width="1" height="1"/><rect x="7" y="6" width="1" height="1"/><rect x="8" y="6" width="1" height="1"/><rect x="3" y="7" width="1" height="1"/><rect x="4" y="7" width="1" height="1"/><rect x="5" y="7" width="1" height="1"/><rect x="6" y="7" width="1" height="1"/><rect x="7" y="7" width="1" height="1"/><rect x="4" y="8" width="1" height="1"/><rect x="5" y="8" width="1" height="1"/><rect x="6" y="8" width="1" height="1"/><rect x="5" y="9" width="1" height="1"/></g></svg>
<div class="t" style="left:585px;top:430px">Пиковая скорость</div>
<div class="box" style="left:567px;top:444px;width:165px;height:16px;color:#fff">122.6 Мбайт/сек</div>
<div class="t" style="left:567px;top:463px">Загрузка процессора</div>
<div class="box" style="left:567px;top:477px;width:165px;height:16px;color:#fff">48.6%</div>
<svg class="a" style="left:0;top:0" width="779" height="552" shape-rendering="crispEdges"><rect x="37" y="92" width="12" height="1" fill="#000"/><rect x="37" y="93" width="1" height="1" fill="#000"/><rect x="38" y="93" width="10" height="1" fill="#fff"/><rect x="48" y="93" width="2" height="1" fill="#000"/><rect x="37" y="94" width="1" height="1" fill="#000"/><rect x="38" y="94" width="4" height="1" fill="#fff"/><rect x="42" y="94" width="3" height="1" fill="#000"/><rect x="45" y="94" width="3" height="1" fill="#fff"/><rect x="48" y="94" width="1" height="1" fill="#000"/><rect x="49" y="94" width="1" height="1" fill="#fff"/><rect x="50" y="94" width="1" height="1" fill="#000"/><rect x="37" y="95" width="1" height="1" fill="#000"/><rect x="38" y="95" width="3" height="1" fill="#fff"/><rect x="41" y="95" width="1" height="1" fill="#000"/><rect x="42" y="95" width="1" height="1" fill="#c000c8"/><rect x="43" y="95" width="1" height="1" fill="#f060f0"/><rect x="44" y="95" width="1" height="1" fill="#c000c8"/><rect x="45" y="95" width="1" height="1" fill="#000"/><rect x="46" y="95" width="2" height="1" fill="#fff"/><rect x="48" y="95" width="3" height="1" fill="#000"/><rect x="37" y="96" width="1" height="1" fill="#000"/><rect x="38" y="96" width="2" height="1" fill="#fff"/><rect x="40" y="96" width="1" height="1" fill="#000"/><rect x="41" y="96" width="1" height="1" fill="#c000c8"/><rect x="42" y="96" width="1" height="1" fill="#f060f0"/><rect x="43" y="96" width="3" height="1" fill="#c000c8"/><rect x="46" y="96" width="1" height="1" fill="#000"/><rect x="47" y="96" width="2" height="1" fill="#fff"/><rect x="49" y="96" width="1" height="1" fill="#808080"/><rect x="50" y="96" width="1" height="1" fill="#000"/><rect x="37" y="97" width="1" height="1" fill="#000"/><rect x="38" y="97" width="2" height="1" fill="#fff"/><rect x="40" y="97" width="1" height="1" fill="#000"/><rect x="41" y="97" width="1" height="1" fill="#c000c8"/><rect x="42" y="97" width="1" height="1" fill="#f060f0"/><rect x="43" y="97" width="3" height="1" fill="#c000c8"/><rect x="46" y="97" width="1" height="1" fill="#000"/><rect x="47" y="97" width="2" height="1" fill="#fff"/><rect x="49" y="97" width="1" height="1" fill="#808080"/><rect x="50" y="97" width="1" height="1" fill="#000"/><rect x="37" y="98" width="1" height="1" fill="#000"/><rect x="38" y="98" width="2" height="1" fill="#fff"/><rect x="40" y="98" width="1" height="1" fill="#000"/><rect x="41" y="98" width="4" height="1" fill="#c000c8"/><rect x="45" y="98" width="1" height="1" fill="#700070"/><rect x="46" y="98" width="1" height="1" fill="#000"/><rect x="47" y="98" width="2" height="1" fill="#fff"/><rect x="49" y="98" width="1" height="1" fill="#808080"/><rect x="50" y="98" width="1" height="1" fill="#000"/><rect x="37" y="99" width="1" height="1" fill="#000"/><rect x="38" y="99" width="3" height="1" fill="#fff"/><rect x="41" y="99" width="1" height="1" fill="#000"/><rect x="42" y="99" width="3" height="1" fill="#c000c8"/><rect x="45" y="99" width="1" height="1" fill="#000"/><rect x="46" y="99" width="3" height="1" fill="#fff"/><rect x="49" y="99" width="1" height="1" fill="#808080"/><rect x="50" y="99" width="1" height="1" fill="#000"/><rect x="37" y="100" width="1" height="1" fill="#000"/><rect x="38" y="100" width="3" height="1" fill="#fff"/><rect x="41" y="100" width="1" height="1" fill="#000"/><rect x="42" y="100" width="2" height="1" fill="#c000c8"/><rect x="44" y="100" width="1" height="1" fill="#700070"/><rect x="45" y="100" width="1" height="1" fill="#000"/><rect x="46" y="100" width="3" height="1" fill="#fff"/><rect x="49" y="100" width="1" height="1" fill="#808080"/><rect x="50" y="100" width="1" height="1" fill="#000"/><rect x="37" y="101" width="1" height="1" fill="#000"/><rect x="38" y="101" width="3" height="1" fill="#fff"/><rect x="41" y="101" width="1" height="1" fill="#000"/><rect x="42" y="101" width="2" height="1" fill="#c000c8"/><rect x="44" y="101" width="1" height="1" fill="#700070"/><rect x="45" y="101" width="1" height="1" fill="#000"/><rect x="46" y="101" width="3" height="1" fill="#fff"/><rect x="49" y="101" width="1" height="1" fill="#808080"/><rect x="50" y="101" width="1" height="1" fill="#000"/><rect x="37" y="102" width="1" height="1" fill="#000"/><rect x="38" y="102" width="4" height="1" fill="#fff"/><rect x="42" y="102" width="3" height="1" fill="#000"/><rect x="45" y="102" width="4" height="1" fill="#fff"/><rect x="49" y="102" width="1" height="1" fill="#808080"/><rect x="50" y="102" width="1" height="1" fill="#000"/><rect x="37" y="103" width="1" height="1" fill="#000"/><rect x="38" y="103" width="11" height="1" fill="#fff"/><rect x="49" y="103" width="1" height="1" fill="#808080"/><rect x="50" y="103" width="1" height="1" fill="#000"/><rect x="37" y="104" width="1" height="1" fill="#000"/><rect x="38" y="104" width="4" height="1" fill="#fff"/><rect x="42" y="104" width="3" height="1" fill="#000"/><rect x="45" y="104" width="4" height="1" fill="#fff"/><rect x="49" y="104" width="1" height="1" fill="#808080"/><rect x="50" y="104" width="1" height="1" fill="#000"/><rect x="37" y="105" width="1" height="1" fill="#000"/><rect x="38" y="105" width="3" height="1" fill="#fff"/><rect x="41" y="105" width="1" height="1" fill="#000"/><rect x="42" y="105" width="3" height="1" fill="#c000c8"/><rect x="45" y="105" width="1" height="1" fill="#000"/><rect x="46" y="105" width="3" height="1" fill="#fff"/><rect x="49" y="105" width="1" height="1" fill="#808080"/><rect x="50" y="105" width="1" height="1" fill="#000"/><rect x="37" y="106" width="1" height="1" fill="#000"/><rect x="38" y="106" width="4" height="1" fill="#808080"/><rect x="42" y="106" width="3" height="1" fill="#000"/><rect x="45" y="106" width="5" height="1" fill="#808080"/><rect x="50" y="106" width="1" height="1" fill="#000"/><rect x="37" y="107" width="14" height="1" fill="#000"/><rect x="156" y="92" width="16" height="1" fill="#000"/><rect x="156" y="93" width="1" height="1" fill="#000"/><rect x="157" y="93" width="14" height="1" fill="#fff"/><rect x="171" y="93" width="1" height="1" fill="#000"/><rect x="156" y="94" width="1" height="1" fill="#000"/><rect x="157" y="94" width="14" height="1" fill="#fff"/><rect x="171" y="94" width="1" height="1" fill="#000"/><rect x="156" y="95" width="1" height="1" fill="#000"/><rect x="157" y="95" width="14" height="1" fill="#f6f6c4"/><rect x="171" y="95" width="1" height="1" fill="#000"/><rect x="156" y="96" width="1" height="1" fill="#000"/><rect x="157" y="96" width="14" height="1" fill="#f6f6c4"/><rect x="171" y="96" width="1" height="1" fill="#000"/><rect x="156" y="97" width="1" height="1" fill="#000"/><rect x="157" y="97" width="14" height="1" fill="#f6f6c4"/><rect x="171" y="97" width="1" height="1" fill="#000"/><rect x="156" y="98" width="1" height="1" fill="#000"/><rect x="157" y="98" width="6" height="1" fill="#f6f6c4"/><rect x="163" y="98" width="1" height="1" fill="#108068"/><rect x="164" y="98" width="7" height="1" fill="#f6f6c4"/><rect x="171" y="98" width="1" height="1" fill="#000"/><rect x="156" y="99" width="1" height="1" fill="#000"/><rect x="157" y="99" width="2" height="1" fill="#30d040"/><rect x="159" y="99" width="4" height="1" fill="#f6f6c4"/><rect x="163" y="99" width="1" height="1" fill="#108068"/><rect x="164" y="99" width="3" height="1" fill="#10e020"/><rect x="167" y="99" width="4" height="1" fill="#f6f6c4"/><rect x="171" y="99" width="1" height="1" fill="#000"/><rect x="156" y="100" width="1" height="1" fill="#000"/><rect x="157" y="100" width="2" height="1" fill="#30d040"/><rect x="159" y="100" width="4" height="1" fill="#f6f6c4"/><rect x="163" y="100" width="1" height="1" fill="#108068"/><rect x="164" y="100" width="3" height="1" fill="#10e020"/><rect x="167" y="100" width="4" height="1" fill="#f6f6c4"/><rect x="171" y="100" width="1" height="1" fill="#000"/><rect x="156" y="101" width="1" height="1" fill="#000"/><rect x="157" y="101" width="2" height="1" fill="#30d040"/><rect x="159" y="101" width="4" height="1" fill="#f6f6c4"/><rect x="163" y="101" width="1" height="1" fill="#108068"/><rect x="164" y="101" width="3" height="1" fill="#10e020"/><rect x="167" y="101" width="3" height="1" fill="#108068"/><rect x="170" y="101" width="1" height="1" fill="#f6f6c4"/><rect x="171" y="101" width="1" height="1" fill="#000"/><rect x="156" y="102" width="1" height="1" fill="#000"/><rect x="157" y="102" width="2" height="1" fill="#30d040"/><rect x="159" y="102" width="3" height="1" fill="#108068"/><rect x="162" y="102" width="1" height="1" fill="#fff"/><rect x="163" y="102" width="1" height="1" fill="#108068"/><rect x="164" y="102" width="3" height="1" fill="#10e020"/><rect x="167" y="102" width="2" height="1" fill="#108068"/><rect x="169" y="102" width="2" height="1" fill="#30d040"/><rect x="171" y="102" width="1" height="1" fill="#000"/><rect x="156" y="103" width="1" height="1" fill="#000"/><rect x="157" y="103" width="2" height="1" fill="#30d040"/><rect x="159" y="103" width="2" height="1" fill="#108068"/><rect x="161" y="103" width="2" height="1" fill="#40b898"/><rect x="163" y="103" width="1" height="1" fill="#108068"/><rect x="164" y="103" width="3" height="1" fill="#10e020"/><rect x="167" y="103" width="2" height="1" fill="#108068"/><rect x="169" y="103" width="2" height="1" fill="#30d040"/><rect x="171" y="103" width="1" height="1" fill="#000"/><rect x="156" y="104" width="1" height="1" fill="#000"/><rect x="157" y="104" width="2" height="1" fill="#30d040"/><rect x="159" y="104" width="2" height="1" fill="#108068"/><rect x="161" y="104" width="2" height="1" fill="#40b898"/><rect x="163" y="104" width="1" height="1" fill="#108068"/><rect x="164" y="104" width="3" height="1" fill="#10e020"/><rect x="167" y="104" width="2" height="1" fill="#108068"/><rect x="169" y="104" width="2" height="1" fill="#30d040"/><rect x="171" y="104" width="1" height="1" fill="#000"/><rect x="156" y="105" width="1" height="1" fill="#000"/><rect x="157" y="105" width="2" height="1" fill="#30d040"/><rect x="159" y="105" width="2" height="1" fill="#108068"/><rect x="161" y="105" width="2" height="1" fill="#40b898"/><rect x="163" y="105" width="1" height="1" fill="#108068"/><rect x="164" y="105" width="3" height="1" fill="#10e020"/><rect x="167" y="105" width="2" height="1" fill="#108068"/><rect x="169" y="105" width="2" height="1" fill="#30d040"/><rect x="171" y="105" width="1" height="1" fill="#000"/><rect x="156" y="106" width="1" height="1" fill="#000"/><rect x="157" y="106" width="2" height="1" fill="#30d040"/><rect x="159" y="106" width="2" height="1" fill="#108068"/><rect x="161" y="106" width="2" height="1" fill="#40b898"/><rect x="163" y="106" width="1" height="1" fill="#108068"/><rect x="164" y="106" width="3" height="1" fill="#10e020"/><rect x="167" y="106" width="2" height="1" fill="#108068"/><rect x="169" y="106" width="2" height="1" fill="#30d040"/><rect x="171" y="106" width="1" height="1" fill="#000"/><rect x="156" y="107" width="16" height="1" fill="#000"/><rect x="324" y="92" width="2" height="1" fill="#000"/><rect x="323" y="93" width="1" height="1" fill="#000"/><rect x="324" y="93" width="1" height="1" fill="#e8e890"/><rect x="325" y="93" width="1" height="1" fill="#000"/><rect x="322" y="94" width="1" height="1" fill="#000"/><rect x="323" y="94" width="1" height="1" fill="#eeee30"/><rect x="324" y="94" width="1" height="1" fill="#e8e890"/><rect x="325" y="94" width="1" height="1" fill="#000"/><rect x="321" y="95" width="1" height="1" fill="#000"/><rect x="322" y="95" width="2" height="1" fill="#eeee30"/><rect x="324" y="95" width="1" height="1" fill="#e8e890"/><rect x="325" y="95" width="1" height="1" fill="#000"/><rect x="328" y="95" width="1" height="1" fill="#000"/><rect x="320" y="96" width="1" height="1" fill="#000"/><rect x="321" y="96" width="3" height="1" fill="#eeee30"/><rect x="324" y="96" width="1" height="1" fill="#e8e890"/><rect x="325" y="96" width="1" height="1" fill="#000"/><rect x="329" y="96" width="1" height="1" fill="#000"/><rect x="316" y="97" width="4" height="1" fill="#000"/><rect x="320" y="97" width="3" height="1" fill="#eeee30"/><rect x="323" y="97" width="1" height="1" fill="#000"/><rect x="324" y="97" width="1" height="1" fill="#e8e890"/><rect x="325" y="97" width="1" height="1" fill="#000"/><rect x="327" y="97" width="1" height="1" fill="#000"/><rect x="330" y="97" width="1" height="1" fill="#000"/><rect x="315" y="98" width="1" height="1" fill="#000"/><rect x="316" y="98" width="1" height="1" fill="#ffffa0"/><rect x="317" y="98" width="1" height="1" fill="#000"/><rect x="318" y="98" width="5" height="1" fill="#eeee30"/><rect x="323" y="98" width="1" height="1" fill="#000"/><rect x="324" y="98" width="1" height="1" fill="#e8e890"/><rect x="325" y="98" width="1" height="1" fill="#000"/><rect x="328" y="98" width="1" height="1" fill="#000"/><rect x="331" y="98" width="1" height="1" fill="#000"/><rect x="315" y="99" width="1" height="1" fill="#000"/><rect x="316" y="99" width="1" height="1" fill="#eeee30"/><rect x="317" y="99" width="1" height="1" fill="#000"/><rect x="318" y="99" width="6" height="1" fill="#eeee30"/><rect x="324" y="99" width="1" height="1" fill="#e8e890"/><rect x="325" y="99" width="1" height="1" fill="#000"/><rect x="328" y="99" width="1" height="1" fill="#000"/><rect x="331" y="99" width="1" height="1" fill="#000"/><rect x="315" y="100" width="1" height="1" fill="#000"/><rect x="316" y="100" width="1" height="1" fill="#ffffa0"/><rect x="317" y="100" width="1" height="1" fill="#000"/><rect x="318" y="100" width="5" height="1" fill="#eeee30"/><rect x="323" y="100" width="1" height="1" fill="#000"/><rect x="324" y="100" width="1" height="1" fill="#e8e890"/><rect x="325" y="100" width="1" height="1" fill="#000"/><rect x="328" y="100" width="1" height="1" fill="#000"/><rect x="331" y="100" width="1" height="1" fill="#000"/><rect x="316" y="101" width="4" height="1" fill="#000"/><rect x="320" y="101" width="4" height="1" fill="#eeee30"/><rect x="324" y="101" width="1" height="1" fill="#e8e890"/><rect x="325" y="101" width="1" height="1" fill="#000"/><rect x="327" y="101" width="1" height="1" fill="#000"/><rect x="330" y="101" width="1" height="1" fill="#000"/><rect x="320" y="102" width="1" height="1" fill="#000"/><rect x="321" y="102" width="3" height="1" fill="#eeee30"/><rect x="324" y="102" width="1" height="1" fill="#e8e890"/><rect x="325" y="102" width="1" height="1" fill="#000"/><rect x="329" y="102" width="1" height="1" fill="#000"/><rect x="321" y="103" width="1" height="1" fill="#000"/><rect x="322" y="103" width="2" height="1" fill="#eeee30"/><rect x="324" y="103" width="1" height="1" fill="#e8e890"/><rect x="325" y="103" width="1" height="1" fill="#000"/><rect x="328" y="103" width="1" height="1" fill="#000"/><rect x="322" y="104" width="1" height="1" fill="#000"/><rect x="323" y="104" width="1" height="1" fill="#eeee30"/><rect x="324" y="104" width="1" height="1" fill="#e8e890"/><rect x="325" y="104" width="1" height="1" fill="#000"/><rect x="323" y="105" width="1" height="1" fill="#000"/><rect x="324" y="105" width="1" height="1" fill="#e8e890"/><rect x="325" y="105" width="1" height="1" fill="#000"/><rect x="324" y="106" width="2" height="1" fill="#000"/><rect x="453" y="92" width="16" height="16" fill="#000"/><rect x="454" y="93" width="14" height="14" fill="#fbf4c8"/><rect x="454" y="93" width="14" height="3" fill="#fffff0"/><rect x="456" y="99" width="1" height="1" fill="#202020"/><rect x="455" y="101" width="1" height="1" fill="#202020"/><rect x="458" y="102" width="1" height="1" fill="#202020"/><rect x="460" y="99" width="1" height="1" fill="#202020"/><rect x="462" y="97" width="1" height="1" fill="#202020"/><rect x="464" y="96" width="1" height="1" fill="#202020"/><rect x="464" y="98" width="1" height="1" fill="#202020"/><rect x="456" y="102" width="1" height="1" fill="#b06000"/><rect x="456" y="104" width="1" height="1" fill="#b06000"/><rect x="460" y="101" width="1" height="1" fill="#b06000"/><rect x="460" y="104" width="1" height="1" fill="#b06000"/><rect x="462" y="103" width="1" height="1" fill="#b06000"/><rect x="464" y="101" width="1" height="1" fill="#b06000"/><rect x="465" y="103" width="1" height="1" fill="#b06000"/><rect x="455" y="106" width="1" height="1" fill="#b06000"/><rect x="597" y="92" width="16" height="16" fill="#000"/><rect x="598" y="93" width="14" height="14" fill="#f8f6c8"/><rect x="598" y="93" width="14" height="3" fill="#fffff0"/><rect x="598" y="99" width="2" height="8" fill="#20e030"/><rect x="600" y="102" width="2" height="5" fill="#2050d0"/><rect x="602" y="98" width="10" height="9" fill="#000"/><rect x="603" y="98" width="9" height="2" fill="#000080"/><rect x="603" y="100" width="9" height="7" fill="#fff4f4"/><rect x="605" y="101" width="1" height="1" fill="#a04040"/><rect x="607" y="101" width="1" height="1" fill="#303080"/><rect x="609" y="101" width="1" height="1" fill="#a04040"/><rect x="605" y="103" width="1" height="1" fill="#a04040"/><rect x="607" y="103" width="1" height="1" fill="#303080"/><rect x="609" y="103" width="1" height="1" fill="#a04040"/><rect x="605" y="105" width="1" height="1" fill="#a04040"/><rect x="607" y="105" width="1" height="1" fill="#303080"/><rect x="609" y="105" width="1" height="1" fill="#a04040"/><rect x="44" y="110" width="5" height="1" fill="#202000"/><rect x="43" y="111" width="1" height="1" fill="#202000"/><rect x="44" y="111" width="1" height="1" fill="#d4d400"/><rect x="45" y="111" width="1" height="1" fill="#f0f070"/><rect x="46" y="111" width="3" height="1" fill="#d4d400"/><rect x="49" y="111" width="1" height="1" fill="#202000"/><rect x="43" y="112" width="1" height="1" fill="#202000"/><rect x="44" y="112" width="1" height="1" fill="#f0f070"/><rect x="45" y="112" width="4" height="1" fill="#d4d400"/><rect x="49" y="112" width="1" height="1" fill="#202000"/><rect x="43" y="113" width="1" height="1" fill="#202000"/><rect x="44" y="113" width="1" height="1" fill="#f0f070"/><rect x="45" y="113" width="4" height="1" fill="#d4d400"/><rect x="49" y="113" width="1" height="1" fill="#202000"/><rect x="43" y="114" width="1" height="1" fill="#202000"/><rect x="44" y="114" width="5" height="1" fill="#d4d400"/><rect x="49" y="114" width="1" height="1" fill="#202000"/><rect x="43" y="115" width="1" height="1" fill="#202000"/><rect x="44" y="115" width="5" height="1" fill="#d4d400"/><rect x="49" y="115" width="1" height="1" fill="#202000"/><rect x="43" y="116" width="1" height="1" fill="#202000"/><rect x="44" y="116" width="5" height="1" fill="#d4d400"/><rect x="49" y="116" width="1" height="1" fill="#202000"/><rect x="44" y="117" width="1" height="1" fill="#202000"/><rect x="45" y="117" width="3" height="1" fill="#d4d400"/><rect x="48" y="117" width="1" height="1" fill="#202000"/><rect x="44" y="118" width="1" height="1" fill="#202000"/><rect x="45" y="118" width="3" height="1" fill="#d4d400"/><rect x="48" y="118" width="1" height="1" fill="#202000"/><rect x="44" y="119" width="1" height="1" fill="#202000"/><rect x="45" y="119" width="3" height="1" fill="#d4d400"/><rect x="48" y="119" width="1" height="1" fill="#202000"/><rect x="45" y="120" width="3" height="1" fill="#202000"/><rect x="45" y="122" width="3" height="1" fill="#202000"/><rect x="44" y="123" width="1" height="1" fill="#202000"/><rect x="45" y="123" width="3" height="1" fill="#a0a050"/><rect x="48" y="123" width="1" height="1" fill="#202000"/><rect x="44" y="124" width="1" height="1" fill="#202000"/><rect x="45" y="124" width="3" height="1" fill="#a0a050"/><rect x="48" y="124" width="1" height="1" fill="#202000"/><rect x="45" y="125" width="3" height="1" fill="#202000"/><rect x="146" y="112" width="4" height="1" fill="#000018"/><rect x="145" y="113" width="1" height="1" fill="#000018"/><rect x="146" y="113" width="4" height="1" fill="#40b8f0"/><rect x="150" y="113" width="1" height="1" fill="#000018"/><rect x="145" y="114" width="1" height="1" fill="#000018"/><rect x="146" y="114" width="1" height="1" fill="#40b8f0"/><rect x="147" y="114" width="1" height="1" fill="#a8e4ff"/><rect x="148" y="114" width="2" height="1" fill="#40b8f0"/><rect x="150" y="114" width="1" height="1" fill="#000018"/><rect x="145" y="115" width="1" height="1" fill="#000018"/><rect x="146" y="115" width="4" height="1" fill="#40b8f0"/><rect x="150" y="115" width="1" height="1" fill="#000018"/><rect x="146" y="116" width="4" height="1" fill="#000018"/><rect x="144" y="118" width="7" height="1" fill="#000018"/><rect x="144" y="119" width="1" height="1" fill="#000018"/><rect x="145" y="119" width="1" height="1" fill="#1058f0"/><rect x="146" y="119" width="1" height="1" fill="#5090ff"/><rect x="147" y="119" width="3" height="1" fill="#1058f0"/><rect x="150" y="119" width="1" height="1" fill="#000018"/><rect x="144" y="120" width="2" height="1" fill="#000018"/><rect x="146" y="120" width="1" height="1" fill="#5090ff"/><rect x="147" y="120" width="3" height="1" fill="#1058f0"/><rect x="150" y="120" width="1" height="1" fill="#000018"/><rect x="145" y="121" width="1" height="1" fill="#000018"/><rect x="146" y="121" width="1" height="1" fill="#5090ff"/><rect x="147" y="121" width="3" height="1" fill="#1058f0"/><rect x="150" y="121" width="1" height="1" fill="#000018"/><rect x="145" y="122" width="1" height="1" fill="#000018"/><rect x="146" y="122" width="4" height="1" fill="#1058f0"/><rect x="150" y="122" width="1" height="1" fill="#000018"/><rect x="145" y="123" width="1" height="1" fill="#000018"/><rect x="146" y="123" width="4" height="1" fill="#1058f0"/><rect x="150" y="123" width="1" height="1" fill="#000018"/><rect x="145" y="124" width="1" height="1" fill="#000018"/><rect x="146" y="124" width="4" height="1" fill="#1058f0"/><rect x="150" y="124" width="1" height="1" fill="#000018"/><rect x="144" y="125" width="1" height="1" fill="#000018"/><rect x="145" y="125" width="6" height="1" fill="#1058f0"/><rect x="151" y="125" width="1" height="1" fill="#000018"/><rect x="143" y="126" width="1" height="1" fill="#000018"/><rect x="144" y="126" width="8" height="1" fill="#1058f0"/><rect x="152" y="126" width="1" height="1" fill="#000018"/><rect x="143" y="127" width="10" height="1" fill="#000018"/><rect x="279" y="112" width="6" height="1" fill="#300000"/><rect x="279" y="113" width="1" height="1" fill="#300000"/><rect x="280" y="113" width="1" height="1" fill="#ff6060"/><rect x="281" y="113" width="3" height="1" fill="#e02020"/><rect x="284" y="113" width="1" height="1" fill="#300000"/><rect x="279" y="114" width="1" height="1" fill="#300000"/><rect x="280" y="114" width="1" height="1" fill="#ff6060"/><rect x="281" y="114" width="3" height="1" fill="#e02020"/><rect x="284" y="114" width="1" height="1" fill="#300000"/><rect x="279" y="115" width="1" height="1" fill="#300000"/><rect x="280" y="115" width="4" height="1" fill="#e02020"/><rect x="284" y="115" width="1" height="1" fill="#300000"/><rect x="279" y="116" width="1" height="1" fill="#300000"/><rect x="280" y="116" width="4" height="1" fill="#e02020"/><rect x="284" y="116" width="1" height="1" fill="#300000"/><rect x="274" y="117" width="6" height="1" fill="#300000"/><rect x="280" y="117" width="4" height="1" fill="#e02020"/><rect x="284" y="117" width="6" height="1" fill="#300000"/><rect x="274" y="118" width="1" height="1" fill="#300000"/><rect x="275" y="118" width="2" height="1" fill="#ff6060"/><rect x="277" y="118" width="12" height="1" fill="#e02020"/><rect x="289" y="118" width="1" height="1" fill="#300000"/><rect x="274" y="119" width="1" height="1" fill="#300000"/><rect x="275" y="119" width="14" height="1" fill="#e02020"/><rect x="289" y="119" width="1" height="1" fill="#300000"/><rect x="274" y="120" width="1" height="1" fill="#300000"/><rect x="275" y="120" width="14" height="1" fill="#e02020"/><rect x="289" y="120" width="1" height="1" fill="#300000"/><rect x="274" y="121" width="1" height="1" fill="#300000"/><rect x="275" y="121" width="14" height="1" fill="#e02020"/><rect x="289" y="121" width="1" height="1" fill="#300000"/><rect x="274" y="122" width="6" height="1" fill="#300000"/><rect x="280" y="122" width="4" height="1" fill="#e02020"/><rect x="284" y="122" width="6" height="1" fill="#300000"/><rect x="279" y="123" width="1" height="1" fill="#300000"/><rect x="280" y="123" width="4" height="1" fill="#e02020"/><rect x="284" y="123" width="1" height="1" fill="#300000"/><rect x="279" y="124" width="1" height="1" fill="#300000"/><rect x="280" y="124" width="4" height="1" fill="#e02020"/><rect x="284" y="124" width="1" height="1" fill="#300000"/><rect x="279" y="125" width="1" height="1" fill="#300000"/><rect x="280" y="125" width="4" height="1" fill="#e02020"/><rect x="284" y="125" width="1" height="1" fill="#300000"/><rect x="279" y="126" width="1" height="1" fill="#300000"/><rect x="280" y="126" width="4" height="1" fill="#e02020"/><rect x="284" y="126" width="1" height="1" fill="#300000"/><rect x="279" y="127" width="6" height="1" fill="#300000"/><path d="M401 121 L406.5 126.5" stroke="#000" stroke-width="4" stroke-linecap="round"/><path d="M401 121 L406.5 126.5" stroke="#1020b0" stroke-width="2.2" stroke-linecap="round"/><polygon points="394.5,112.5 399.5,112.5 402.5,115.5 402.5,119.5 399.5,122.5 394.5,122.5 391.5,119.5 391.5,115.5" fill="#40d050" stroke="#000" stroke-width="1.2"/><path d="M396 115 L397.5 113.8 M397 120 L400.5 116.5" stroke="#b0f0b0" stroke-width="0.8"/><rect x="534" y="112" width="4" height="1" fill="#000"/><rect x="533" y="113" width="1" height="1" fill="#000"/><rect x="534" y="113" width="1" height="1" fill="#fff8c0"/><rect x="535" y="113" width="3" height="1" fill="#f8e070"/><rect x="538" y="113" width="1" height="1" fill="#000"/><rect x="532" y="114" width="1" height="1" fill="#000"/><rect x="533" y="114" width="1" height="1" fill="#fff8c0"/><rect x="534" y="114" width="5" height="1" fill="#f8e070"/><rect x="539" y="114" width="6" height="1" fill="#000"/><rect x="532" y="115" width="1" height="1" fill="#000"/><rect x="533" y="115" width="1" height="1" fill="#fff8c0"/><rect x="534" y="115" width="10" height="1" fill="#f8e070"/><rect x="544" y="115" width="1" height="1" fill="#000"/><rect x="532" y="116" width="1" height="1" fill="#000"/><rect x="533" y="116" width="1" height="1" fill="#fff8c0"/><rect x="534" y="116" width="2" height="1" fill="#f8e070"/><rect x="536" y="116" width="11" height="1" fill="#000"/><rect x="532" y="117" width="1" height="1" fill="#000"/><rect x="533" y="117" width="1" height="1" fill="#fff8c0"/><rect x="534" y="117" width="1" height="1" fill="#f8e070"/><rect x="535" y="117" width="1" height="1" fill="#000"/><rect x="536" y="117" width="10" height="1" fill="#fff8c0"/><rect x="546" y="117" width="1" height="1" fill="#000"/><rect x="532" y="118" width="1" height="1" fill="#000"/><rect x="533" y="118" width="1" height="1" fill="#fff8c0"/><rect x="534" y="118" width="1" height="1" fill="#f8e070"/><rect x="535" y="118" width="1" height="1" fill="#000"/><rect x="536" y="118" width="1" height="1" fill="#fff8c0"/><rect x="537" y="118" width="8" height="1" fill="#e8c018"/><rect x="545" y="118" width="1" height="1" fill="#fff8c0"/><rect x="546" y="118" width="1" height="1" fill="#000"/><rect x="532" y="119" width="1" height="1" fill="#000"/><rect x="533" y="119" width="1" height="1" fill="#fff8c0"/><rect x="534" y="119" width="1" height="1" fill="#f8e070"/><rect x="535" y="119" width="1" height="1" fill="#000"/><rect x="536" y="119" width="1" height="1" fill="#fff8c0"/><rect x="537" y="119" width="7" height="1" fill="#e8c018"/><rect x="544" y="119" width="1" height="1" fill="#c8a010"/><rect x="545" y="119" width="1" height="1" fill="#a08000"/><rect x="546" y="119" width="1" height="1" fill="#000"/><rect x="532" y="120" width="1" height="1" fill="#000"/><rect x="533" y="120" width="1" height="1" fill="#fff8c0"/><rect x="534" y="120" width="1" height="1" fill="#f8e070"/><rect x="535" y="120" width="1" height="1" fill="#000"/><rect x="536" y="120" width="1" height="1" fill="#fff8c0"/><rect x="537" y="120" width="7" height="1" fill="#e8c018"/><rect x="544" y="120" width="1" height="1" fill="#c8a010"/><rect x="545" y="120" width="1" height="1" fill="#a08000"/><rect x="546" y="120" width="1" height="1" fill="#000"/><rect x="532" y="121" width="1" height="1" fill="#000"/><rect x="533" y="121" width="1" height="1" fill="#fff8c0"/><rect x="534" y="121" width="1" height="1" fill="#f8e070"/><rect x="535" y="121" width="1" height="1" fill="#000"/><rect x="536" y="121" width="1" height="1" fill="#fff8c0"/><rect x="537" y="121" width="6" height="1" fill="#e8c018"/><rect x="543" y="121" width="2" height="1" fill="#c8a010"/><rect x="545" y="121" width="1" height="1" fill="#a08000"/><rect x="546" y="121" width="1" height="1" fill="#000"/><rect x="532" y="122" width="1" height="1" fill="#000"/><rect x="533" y="122" width="1" height="1" fill="#fff8c0"/><rect x="534" y="122" width="1" height="1" fill="#f8e070"/><rect x="535" y="122" width="1" height="1" fill="#000"/><rect x="536" y="122" width="1" height="1" fill="#fff8c0"/><rect x="537" y="122" width="6" height="1" fill="#e8c018"/><rect x="543" y="122" width="2" height="1" fill="#c8a010"/><rect x="545" y="122" width="1" height="1" fill="#a08000"/><rect x="546" y="122" width="1" height="1" fill="#000"/><rect x="532" y="123" width="1" height="1" fill="#000"/><rect x="533" y="123" width="1" height="1" fill="#fff8c0"/><rect x="534" y="123" width="1" height="1" fill="#f8e070"/><rect x="535" y="123" width="1" height="1" fill="#000"/><rect x="536" y="123" width="1" height="1" fill="#fff8c0"/><rect x="537" y="123" width="5" height="1" fill="#e8c018"/><rect x="542" y="123" width="3" height="1" fill="#c8a010"/><rect x="545" y="123" width="1" height="1" fill="#a08000"/><rect x="546" y="123" width="1" height="1" fill="#000"/><rect x="532" y="124" width="1" height="1" fill="#000"/><rect x="533" y="124" width="1" height="1" fill="#fff8c0"/><rect x="534" y="124" width="1" height="1" fill="#f8e070"/><rect x="535" y="124" width="1" height="1" fill="#000"/><rect x="536" y="124" width="1" height="1" fill="#fff8c0"/><rect x="537" y="124" width="2" height="1" fill="#e8c018"/><rect x="539" y="124" width="6" height="1" fill="#c8a010"/><rect x="545" y="124" width="1" height="1" fill="#a08000"/><rect x="546" y="124" width="1" height="1" fill="#000"/><rect x="532" y="125" width="1" height="1" fill="#000"/><rect x="533" y="125" width="1" height="1" fill="#fff8c0"/><rect x="534" y="125" width="1" height="1" fill="#f8e070"/><rect x="535" y="125" width="1" height="1" fill="#000"/><rect x="536" y="125" width="1" height="1" fill="#fff8c0"/><rect x="537" y="125" width="9" height="1" fill="#a08000"/><rect x="546" y="125" width="1" height="1" fill="#000"/><rect x="532" y="126" width="15" height="1" fill="#000"/><defs><linearGradient id="trg" x1="0" x2="1"><stop offset="0" stop-color="#303030"/><stop offset="0.3" stop-color="#e8e8e8"/><stop offset="0.55" stop-color="#909090"/><stop offset="1" stop-color="#202020"/></linearGradient></defs><rect x="672" y="112" width="6" height="2" fill="#000"/><rect x="668" y="113" width="14" height="4" fill="#000"/><rect x="669" y="114" width="12" height="2" fill="url(#trg)"/><rect x="669" y="117" width="12" height="11" fill="#000"/><rect x="670" y="117" width="10" height="10" fill="url(#trg)"/><rect x="450" y="52" width="1" height="1" fill="#606060"/><rect x="451" y="52" width="3" height="1" fill="#000"/><rect x="450" y="53" width="1" height="1" fill="#606060"/><rect x="451" y="53" width="2" height="1" fill="#ffffff"/><rect x="453" y="53" width="1" height="1" fill="#000"/><rect x="450" y="54" width="1" height="1" fill="#606060"/><rect x="451" y="54" width="2" height="1" fill="#ffffff"/><rect x="453" y="54" width="2" height="1" fill="#000"/><rect x="450" y="55" width="1" height="1" fill="#606060"/><rect x="451" y="55" width="2" height="1" fill="#e00000"/><rect x="453" y="55" width="2" height="1" fill="#000"/><rect x="450" y="56" width="1" height="1" fill="#606060"/><rect x="451" y="56" width="2" height="1" fill="#e00000"/><rect x="453" y="56" width="2" height="1" fill="#000"/><rect x="450" y="57" width="1" height="1" fill="#606060"/><rect x="451" y="57" width="2" height="1" fill="#e00000"/><rect x="453" y="57" width="2" height="1" fill="#000"/><rect x="450" y="58" width="1" height="1" fill="#606060"/><rect x="451" y="58" width="2" height="1" fill="#e00000"/><rect x="453" y="58" width="2" height="1" fill="#000"/><rect x="450" y="59" width="1" height="1" fill="#606060"/><rect x="451" y="59" width="2" height="1" fill="#e00000"/><rect x="453" y="59" width="2" height="1" fill="#000"/><rect x="450" y="60" width="1" height="1" fill="#606060"/><rect x="451" y="60" width="2" height="1" fill="#e00000"/><rect x="453" y="60" width="2" height="1" fill="#000"/><rect x="450" y="61" width="1" height="1" fill="#606060"/><rect x="451" y="61" width="2" height="1" fill="#e00000"/><rect x="453" y="61" width="2" height="1" fill="#000"/><rect x="449" y="62" width="1" height="1" fill="#606060"/><rect x="450" y="62" width="4" height="1" fill="#e00000"/><rect x="454" y="62" width="1" height="1" fill="#000"/><rect x="448" y="63" width="1" height="1" fill="#606060"/><rect x="449" y="63" width="6" height="1" fill="#e00000"/><rect x="455" y="63" width="1" height="1" fill="#000"/><rect x="448" y="64" width="1" height="1" fill="#606060"/><rect x="449" y="64" width="1" height="1" fill="#e00000"/><rect x="450" y="64" width="1" height="1" fill="#ffffff"/><rect x="451" y="64" width="4" height="1" fill="#e00000"/><rect x="455" y="64" width="2" height="1" fill="#000"/><rect x="448" y="65" width="1" height="1" fill="#606060"/><rect x="449" y="65" width="2" height="1" fill="#e00000"/><rect x="451" y="65" width="1" height="1" fill="#ffffff"/><rect x="452" y="65" width="3" height="1" fill="#e00000"/><rect x="455" y="65" width="2" height="1" fill="#000"/><rect x="448" y="66" width="1" height="1" fill="#606060"/><rect x="449" y="66" width="6" height="1" fill="#e00000"/><rect x="455" y="66" width="2" height="1" fill="#000"/><rect x="449" y="67" width="7" height="1" fill="#000"/><rect x="450" y="68" width="5" height="1" fill="#000"/><rect x="467" y="56" width="3" height="12" fill="#000"/><rect x="468" y="57" width="1" height="10" fill="#f0f0f0"/><rect x="471" y="62" width="7" height="1" fill="#000"/><rect x="485" y="53" width="7" height="13" fill="#000"/><rect x="486" y="54" width="5" height="11" fill="#fff"/><rect x="486" y="57" width="5" height="1" fill="#000080"/><rect x="486" y="58" width="5" height="5" fill="#30c030"/><rect x="487" y="59" width="3" height="3" fill="#60f040"/><rect x="488" y="59" width="1" height="1" fill="#008000"/><rect x="491" y="55" width="9" height="13" fill="#000"/><rect x="492" y="56" width="7" height="11" fill="#fff"/><rect x="497" y="55" width="3" height="2" fill="#d4d0c8"/><rect x="497" y="56" width="1" height="1" fill="#000"/><rect x="498" y="57" width="2" height="1" fill="#000"/><rect x="492" y="59" width="7" height="1" fill="#000080"/><rect x="493" y="60" width="5" height="5" fill="#30c030"/><rect x="494" y="61" width="3" height="3" fill="#60f040"/><rect x="495" y="61" width="1" height="1" fill="#008000"/><rect x="497" y="65" width="1" height="1" fill="#000"/><g shape-rendering="geometricPrecision"><path d="M519 57 L519 55.5 Q519 53.5 521 53.5 L524 53.5 Q526 53.5 526 55.5 L526 57 L529 57 Q531 57 531 59 L531 65 Q531 67 529 67 L516 67 Q514 67 514 65 L514 59 Q514 57 516 57 Z" fill="#fff"/><path d="M520 57.5 L520 56 Q520 54.5 521.5 54.5 L523.5 54.5 Q525 54.5 525 56 L525 57.5 Z" fill="#383838"/><rect x="521" y="55.5" width="3" height="1.5" fill="#c8c8c8"/><rect x="515" y="58" width="15" height="8" rx="1" fill="#2a2a2a"/><rect x="517.6" y="58" width="0.9" height="8" fill="#7a7a7a"/><circle cx="522.6" cy="61.6" r="2.9" fill="#ecebf4"/><rect x="526" y="59" width="2" height="3" fill="#28c040"/></g><g shape-rendering="geometricPrecision"><polygon points="556.50,57.20 555.10,59.19 554.68,61.58 552.29,62.00 550.30,63.40 548.31,62.00 545.92,61.58 545.50,59.19 544.10,57.20 545.50,55.21 545.92,52.82 548.31,52.40 550.30,51.00 552.29,52.40 554.68,52.82 555.10,55.21" fill="#fffff0" opacity="0.85"/><polygon points="561.80,62.60 560.40,64.59 559.98,66.98 557.59,67.40 555.60,68.80 553.61,67.40 551.22,66.98 550.80,64.59 549.40,62.60 550.80,60.61 551.22,58.22 553.61,57.80 555.60,56.40 557.59,57.80 559.98,58.22 560.40,60.61" fill="#fffff0" opacity="0.85"/><polygon points="555.50,57.20 554.18,58.81 553.98,60.88 551.91,61.08 550.30,62.40 548.69,61.08 546.62,60.88 546.42,58.81 545.10,57.20 546.42,55.59 546.62,53.52 548.69,53.32 550.30,52.00 551.91,53.32 553.98,53.52 554.18,55.59" fill="#e4e020" stroke="#3a3a00" stroke-width="1"/><rect x="549.1" y="52.7" width="2.4" height="5.5" fill="#606040"/><rect x="549.8" y="53.7" width="1" height="4" fill="#e8e8e0"/><polygon points="560.80,62.60 559.48,64.21 559.28,66.28 557.21,66.48 555.60,67.80 553.99,66.48 551.92,66.28 551.72,64.21 550.40,62.60 551.72,60.99 551.92,58.92 553.99,58.72 555.60,57.40 557.21,58.72 559.28,58.92 559.48,60.99" fill="#e4e020" stroke="#3a3a00" stroke-width="1"/><rect x="554.4" y="58.1" width="2.4" height="5.5" fill="#606040"/><rect x="555.1" y="59.1" width="1" height="4" fill="#e8e8e0"/></g><rect x="586" y="52" width="3" height="1" fill="#000"/><rect x="586" y="53" width="3" height="1" fill="#000"/><rect x="586" y="54" width="3" height="1" fill="#000"/><rect x="586" y="55" width="3" height="1" fill="#000"/><rect x="586" y="56" width="3" height="1" fill="#000"/><rect x="586" y="57" width="3" height="1" fill="#000"/><rect x="586" y="58" width="3" height="1" fill="#000"/><rect x="586" y="59" width="3" height="1" fill="#000"/><rect x="586" y="60" width="3" height="1" fill="#000"/><rect x="581" y="61" width="14" height="1" fill="#000"/><rect x="582" y="62" width="12" height="1" fill="#000"/><rect x="583" y="63" width="10" height="1" fill="#000"/><rect x="584" y="64" width="8" height="1" fill="#000"/><rect x="585" y="65" width="6" height="1" fill="#000"/><rect x="586" y="66" width="4" height="1" fill="#000"/><rect x="587" y="67" width="2" height="1" fill="#000"/><g shape-rendering="geometricPrecision"><polygon points="5.5,14.5 13,7 21.5,11.5 14,19" fill="#181818"/><polygon points="7,14.5 10,12 13.5,15 11,18" fill="#b8b8c0"/><circle cx="15" cy="10.8" r="4.2" fill="#f2d2a2"/><circle cx="15" cy="10.8" r="1.4" fill="#8a7040"/></g></svg>
</body></html>
